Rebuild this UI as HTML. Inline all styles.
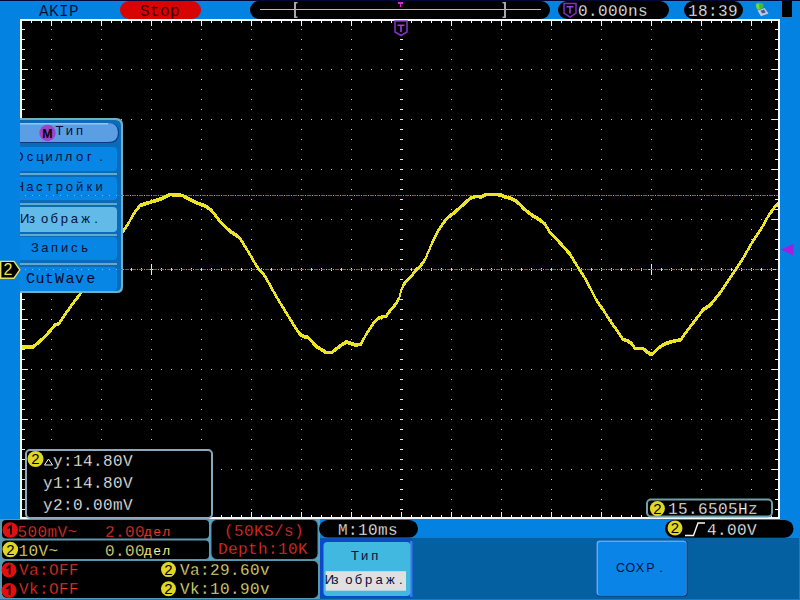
<!DOCTYPE html>
<html><head><meta charset="utf-8"><style>
html,body{margin:0;padding:0;background:#0482e2;overflow:hidden;}
svg{display:block;}
text{white-space:pre;}
</style></head><body>
<svg width="800" height="600" viewBox="0 0 800 600">
<rect width="800" height="600" fill="#0482e2"/><rect width="800" height="1" fill="#00083a"/><rect y="1" width="800" height="1" fill="#2a7ec8" opacity="0.6"/><rect x="20" y="19" width="760" height="500" fill="#f4faff"/><rect x="22" y="21" width="756" height="496" fill="#000"/><path d="M51 29h1v1h-1zM51 39h1v1h-1zM51 49h1v1h-1zM51 59h1v1h-1zM51 69h1v1h-1zM51 79h1v1h-1zM51 89h1v1h-1zM51 99h1v1h-1zM51 109h1v1h-1zM51 119h1v1h-1zM51 129h1v1h-1zM51 139h1v1h-1zM51 149h1v1h-1zM51 159h1v1h-1zM51 169h1v1h-1zM51 179h1v1h-1zM51 189h1v1h-1zM51 199h1v1h-1zM51 209h1v1h-1zM51 219h1v1h-1zM51 229h1v1h-1zM51 239h1v1h-1zM51 249h1v1h-1zM51 259h1v1h-1zM51 269h1v1h-1zM51 279h1v1h-1zM51 289h1v1h-1zM51 299h1v1h-1zM51 309h1v1h-1zM51 319h1v1h-1zM51 329h1v1h-1zM51 339h1v1h-1zM51 349h1v1h-1zM51 359h1v1h-1zM51 369h1v1h-1zM51 379h1v1h-1zM51 389h1v1h-1zM51 399h1v1h-1zM51 409h1v1h-1zM51 419h1v1h-1zM51 429h1v1h-1zM51 439h1v1h-1zM51 449h1v1h-1zM51 459h1v1h-1zM51 469h1v1h-1zM51 479h1v1h-1zM51 489h1v1h-1zM51 499h1v1h-1zM51 509h1v1h-1zM101 29h1v1h-1zM101 39h1v1h-1zM101 49h1v1h-1zM101 59h1v1h-1zM101 69h1v1h-1zM101 79h1v1h-1zM101 89h1v1h-1zM101 99h1v1h-1zM101 109h1v1h-1zM101 119h1v1h-1zM101 129h1v1h-1zM101 139h1v1h-1zM101 149h1v1h-1zM101 159h1v1h-1zM101 169h1v1h-1zM101 179h1v1h-1zM101 189h1v1h-1zM101 199h1v1h-1zM101 209h1v1h-1zM101 219h1v1h-1zM101 229h1v1h-1zM101 239h1v1h-1zM101 249h1v1h-1zM101 259h1v1h-1zM101 269h1v1h-1zM101 279h1v1h-1zM101 289h1v1h-1zM101 299h1v1h-1zM101 309h1v1h-1zM101 319h1v1h-1zM101 329h1v1h-1zM101 339h1v1h-1zM101 349h1v1h-1zM101 359h1v1h-1zM101 369h1v1h-1zM101 379h1v1h-1zM101 389h1v1h-1zM101 399h1v1h-1zM101 409h1v1h-1zM101 419h1v1h-1zM101 429h1v1h-1zM101 439h1v1h-1zM101 449h1v1h-1zM101 459h1v1h-1zM101 469h1v1h-1zM101 479h1v1h-1zM101 489h1v1h-1zM101 499h1v1h-1zM101 509h1v1h-1zM151 29h1v1h-1zM151 39h1v1h-1zM151 49h1v1h-1zM151 59h1v1h-1zM151 69h1v1h-1zM151 79h1v1h-1zM151 89h1v1h-1zM151 99h1v1h-1zM151 109h1v1h-1zM151 119h1v1h-1zM151 129h1v1h-1zM151 139h1v1h-1zM151 149h1v1h-1zM151 159h1v1h-1zM151 169h1v1h-1zM151 179h1v1h-1zM151 189h1v1h-1zM151 199h1v1h-1zM151 209h1v1h-1zM151 219h1v1h-1zM151 229h1v1h-1zM151 239h1v1h-1zM151 249h1v1h-1zM151 259h1v1h-1zM151 269h1v1h-1zM151 279h1v1h-1zM151 289h1v1h-1zM151 299h1v1h-1zM151 309h1v1h-1zM151 319h1v1h-1zM151 329h1v1h-1zM151 339h1v1h-1zM151 349h1v1h-1zM151 359h1v1h-1zM151 369h1v1h-1zM151 379h1v1h-1zM151 389h1v1h-1zM151 399h1v1h-1zM151 409h1v1h-1zM151 419h1v1h-1zM151 429h1v1h-1zM151 439h1v1h-1zM151 449h1v1h-1zM151 459h1v1h-1zM151 469h1v1h-1zM151 479h1v1h-1zM151 489h1v1h-1zM151 499h1v1h-1zM151 509h1v1h-1zM201 29h1v1h-1zM201 39h1v1h-1zM201 49h1v1h-1zM201 59h1v1h-1zM201 69h1v1h-1zM201 79h1v1h-1zM201 89h1v1h-1zM201 99h1v1h-1zM201 109h1v1h-1zM201 119h1v1h-1zM201 129h1v1h-1zM201 139h1v1h-1zM201 149h1v1h-1zM201 159h1v1h-1zM201 169h1v1h-1zM201 179h1v1h-1zM201 189h1v1h-1zM201 199h1v1h-1zM201 209h1v1h-1zM201 219h1v1h-1zM201 229h1v1h-1zM201 239h1v1h-1zM201 249h1v1h-1zM201 259h1v1h-1zM201 269h1v1h-1zM201 279h1v1h-1zM201 289h1v1h-1zM201 299h1v1h-1zM201 309h1v1h-1zM201 319h1v1h-1zM201 329h1v1h-1zM201 339h1v1h-1zM201 349h1v1h-1zM201 359h1v1h-1zM201 369h1v1h-1zM201 379h1v1h-1zM201 389h1v1h-1zM201 399h1v1h-1zM201 409h1v1h-1zM201 419h1v1h-1zM201 429h1v1h-1zM201 439h1v1h-1zM201 449h1v1h-1zM201 459h1v1h-1zM201 469h1v1h-1zM201 479h1v1h-1zM201 489h1v1h-1zM201 499h1v1h-1zM201 509h1v1h-1zM251 29h1v1h-1zM251 39h1v1h-1zM251 49h1v1h-1zM251 59h1v1h-1zM251 69h1v1h-1zM251 79h1v1h-1zM251 89h1v1h-1zM251 99h1v1h-1zM251 109h1v1h-1zM251 119h1v1h-1zM251 129h1v1h-1zM251 139h1v1h-1zM251 149h1v1h-1zM251 159h1v1h-1zM251 169h1v1h-1zM251 179h1v1h-1zM251 189h1v1h-1zM251 199h1v1h-1zM251 209h1v1h-1zM251 219h1v1h-1zM251 229h1v1h-1zM251 239h1v1h-1zM251 249h1v1h-1zM251 259h1v1h-1zM251 269h1v1h-1zM251 279h1v1h-1zM251 289h1v1h-1zM251 299h1v1h-1zM251 309h1v1h-1zM251 319h1v1h-1zM251 329h1v1h-1zM251 339h1v1h-1zM251 349h1v1h-1zM251 359h1v1h-1zM251 369h1v1h-1zM251 379h1v1h-1zM251 389h1v1h-1zM251 399h1v1h-1zM251 409h1v1h-1zM251 419h1v1h-1zM251 429h1v1h-1zM251 439h1v1h-1zM251 449h1v1h-1zM251 459h1v1h-1zM251 469h1v1h-1zM251 479h1v1h-1zM251 489h1v1h-1zM251 499h1v1h-1zM251 509h1v1h-1zM301 29h1v1h-1zM301 39h1v1h-1zM301 49h1v1h-1zM301 59h1v1h-1zM301 69h1v1h-1zM301 79h1v1h-1zM301 89h1v1h-1zM301 99h1v1h-1zM301 109h1v1h-1zM301 119h1v1h-1zM301 129h1v1h-1zM301 139h1v1h-1zM301 149h1v1h-1zM301 159h1v1h-1zM301 169h1v1h-1zM301 179h1v1h-1zM301 189h1v1h-1zM301 199h1v1h-1zM301 209h1v1h-1zM301 219h1v1h-1zM301 229h1v1h-1zM301 239h1v1h-1zM301 249h1v1h-1zM301 259h1v1h-1zM301 269h1v1h-1zM301 279h1v1h-1zM301 289h1v1h-1zM301 299h1v1h-1zM301 309h1v1h-1zM301 319h1v1h-1zM301 329h1v1h-1zM301 339h1v1h-1zM301 349h1v1h-1zM301 359h1v1h-1zM301 369h1v1h-1zM301 379h1v1h-1zM301 389h1v1h-1zM301 399h1v1h-1zM301 409h1v1h-1zM301 419h1v1h-1zM301 429h1v1h-1zM301 439h1v1h-1zM301 449h1v1h-1zM301 459h1v1h-1zM301 469h1v1h-1zM301 479h1v1h-1zM301 489h1v1h-1zM301 499h1v1h-1zM301 509h1v1h-1zM351 29h1v1h-1zM351 39h1v1h-1zM351 49h1v1h-1zM351 59h1v1h-1zM351 69h1v1h-1zM351 79h1v1h-1zM351 89h1v1h-1zM351 99h1v1h-1zM351 109h1v1h-1zM351 119h1v1h-1zM351 129h1v1h-1zM351 139h1v1h-1zM351 149h1v1h-1zM351 159h1v1h-1zM351 169h1v1h-1zM351 179h1v1h-1zM351 189h1v1h-1zM351 199h1v1h-1zM351 209h1v1h-1zM351 219h1v1h-1zM351 229h1v1h-1zM351 239h1v1h-1zM351 249h1v1h-1zM351 259h1v1h-1zM351 269h1v1h-1zM351 279h1v1h-1zM351 289h1v1h-1zM351 299h1v1h-1zM351 309h1v1h-1zM351 319h1v1h-1zM351 329h1v1h-1zM351 339h1v1h-1zM351 349h1v1h-1zM351 359h1v1h-1zM351 369h1v1h-1zM351 379h1v1h-1zM351 389h1v1h-1zM351 399h1v1h-1zM351 409h1v1h-1zM351 419h1v1h-1zM351 429h1v1h-1zM351 439h1v1h-1zM351 449h1v1h-1zM351 459h1v1h-1zM351 469h1v1h-1zM351 479h1v1h-1zM351 489h1v1h-1zM351 499h1v1h-1zM351 509h1v1h-1zM451 29h1v1h-1zM451 39h1v1h-1zM451 49h1v1h-1zM451 59h1v1h-1zM451 69h1v1h-1zM451 79h1v1h-1zM451 89h1v1h-1zM451 99h1v1h-1zM451 109h1v1h-1zM451 119h1v1h-1zM451 129h1v1h-1zM451 139h1v1h-1zM451 149h1v1h-1zM451 159h1v1h-1zM451 169h1v1h-1zM451 179h1v1h-1zM451 189h1v1h-1zM451 199h1v1h-1zM451 209h1v1h-1zM451 219h1v1h-1zM451 229h1v1h-1zM451 239h1v1h-1zM451 249h1v1h-1zM451 259h1v1h-1zM451 269h1v1h-1zM451 279h1v1h-1zM451 289h1v1h-1zM451 299h1v1h-1zM451 309h1v1h-1zM451 319h1v1h-1zM451 329h1v1h-1zM451 339h1v1h-1zM451 349h1v1h-1zM451 359h1v1h-1zM451 369h1v1h-1zM451 379h1v1h-1zM451 389h1v1h-1zM451 399h1v1h-1zM451 409h1v1h-1zM451 419h1v1h-1zM451 429h1v1h-1zM451 439h1v1h-1zM451 449h1v1h-1zM451 459h1v1h-1zM451 469h1v1h-1zM451 479h1v1h-1zM451 489h1v1h-1zM451 499h1v1h-1zM451 509h1v1h-1zM501 29h1v1h-1zM501 39h1v1h-1zM501 49h1v1h-1zM501 59h1v1h-1zM501 69h1v1h-1zM501 79h1v1h-1zM501 89h1v1h-1zM501 99h1v1h-1zM501 109h1v1h-1zM501 119h1v1h-1zM501 129h1v1h-1zM501 139h1v1h-1zM501 149h1v1h-1zM501 159h1v1h-1zM501 169h1v1h-1zM501 179h1v1h-1zM501 189h1v1h-1zM501 199h1v1h-1zM501 209h1v1h-1zM501 219h1v1h-1zM501 229h1v1h-1zM501 239h1v1h-1zM501 249h1v1h-1zM501 259h1v1h-1zM501 269h1v1h-1zM501 279h1v1h-1zM501 289h1v1h-1zM501 299h1v1h-1zM501 309h1v1h-1zM501 319h1v1h-1zM501 329h1v1h-1zM501 339h1v1h-1zM501 349h1v1h-1zM501 359h1v1h-1zM501 369h1v1h-1zM501 379h1v1h-1zM501 389h1v1h-1zM501 399h1v1h-1zM501 409h1v1h-1zM501 419h1v1h-1zM501 429h1v1h-1zM501 439h1v1h-1zM501 449h1v1h-1zM501 459h1v1h-1zM501 469h1v1h-1zM501 479h1v1h-1zM501 489h1v1h-1zM501 499h1v1h-1zM501 509h1v1h-1zM551 29h1v1h-1zM551 39h1v1h-1zM551 49h1v1h-1zM551 59h1v1h-1zM551 69h1v1h-1zM551 79h1v1h-1zM551 89h1v1h-1zM551 99h1v1h-1zM551 109h1v1h-1zM551 119h1v1h-1zM551 129h1v1h-1zM551 139h1v1h-1zM551 149h1v1h-1zM551 159h1v1h-1zM551 169h1v1h-1zM551 179h1v1h-1zM551 189h1v1h-1zM551 199h1v1h-1zM551 209h1v1h-1zM551 219h1v1h-1zM551 229h1v1h-1zM551 239h1v1h-1zM551 249h1v1h-1zM551 259h1v1h-1zM551 269h1v1h-1zM551 279h1v1h-1zM551 289h1v1h-1zM551 299h1v1h-1zM551 309h1v1h-1zM551 319h1v1h-1zM551 329h1v1h-1zM551 339h1v1h-1zM551 349h1v1h-1zM551 359h1v1h-1zM551 369h1v1h-1zM551 379h1v1h-1zM551 389h1v1h-1zM551 399h1v1h-1zM551 409h1v1h-1zM551 419h1v1h-1zM551 429h1v1h-1zM551 439h1v1h-1zM551 449h1v1h-1zM551 459h1v1h-1zM551 469h1v1h-1zM551 479h1v1h-1zM551 489h1v1h-1zM551 499h1v1h-1zM551 509h1v1h-1zM601 29h1v1h-1zM601 39h1v1h-1zM601 49h1v1h-1zM601 59h1v1h-1zM601 69h1v1h-1zM601 79h1v1h-1zM601 89h1v1h-1zM601 99h1v1h-1zM601 109h1v1h-1zM601 119h1v1h-1zM601 129h1v1h-1zM601 139h1v1h-1zM601 149h1v1h-1zM601 159h1v1h-1zM601 169h1v1h-1zM601 179h1v1h-1zM601 189h1v1h-1zM601 199h1v1h-1zM601 209h1v1h-1zM601 219h1v1h-1zM601 229h1v1h-1zM601 239h1v1h-1zM601 249h1v1h-1zM601 259h1v1h-1zM601 269h1v1h-1zM601 279h1v1h-1zM601 289h1v1h-1zM601 299h1v1h-1zM601 309h1v1h-1zM601 319h1v1h-1zM601 329h1v1h-1zM601 339h1v1h-1zM601 349h1v1h-1zM601 359h1v1h-1zM601 369h1v1h-1zM601 379h1v1h-1zM601 389h1v1h-1zM601 399h1v1h-1zM601 409h1v1h-1zM601 419h1v1h-1zM601 429h1v1h-1zM601 439h1v1h-1zM601 449h1v1h-1zM601 459h1v1h-1zM601 469h1v1h-1zM601 479h1v1h-1zM601 489h1v1h-1zM601 499h1v1h-1zM601 509h1v1h-1zM651 29h1v1h-1zM651 39h1v1h-1zM651 49h1v1h-1zM651 59h1v1h-1zM651 69h1v1h-1zM651 79h1v1h-1zM651 89h1v1h-1zM651 99h1v1h-1zM651 109h1v1h-1zM651 119h1v1h-1zM651 129h1v1h-1zM651 139h1v1h-1zM651 149h1v1h-1zM651 159h1v1h-1zM651 169h1v1h-1zM651 179h1v1h-1zM651 189h1v1h-1zM651 199h1v1h-1zM651 209h1v1h-1zM651 219h1v1h-1zM651 229h1v1h-1zM651 239h1v1h-1zM651 249h1v1h-1zM651 259h1v1h-1zM651 269h1v1h-1zM651 279h1v1h-1zM651 289h1v1h-1zM651 299h1v1h-1zM651 309h1v1h-1zM651 319h1v1h-1zM651 329h1v1h-1zM651 339h1v1h-1zM651 349h1v1h-1zM651 359h1v1h-1zM651 369h1v1h-1zM651 379h1v1h-1zM651 389h1v1h-1zM651 399h1v1h-1zM651 409h1v1h-1zM651 419h1v1h-1zM651 429h1v1h-1zM651 439h1v1h-1zM651 449h1v1h-1zM651 459h1v1h-1zM651 469h1v1h-1zM651 479h1v1h-1zM651 489h1v1h-1zM651 499h1v1h-1zM651 509h1v1h-1zM701 29h1v1h-1zM701 39h1v1h-1zM701 49h1v1h-1zM701 59h1v1h-1zM701 69h1v1h-1zM701 79h1v1h-1zM701 89h1v1h-1zM701 99h1v1h-1zM701 109h1v1h-1zM701 119h1v1h-1zM701 129h1v1h-1zM701 139h1v1h-1zM701 149h1v1h-1zM701 159h1v1h-1zM701 169h1v1h-1zM701 179h1v1h-1zM701 189h1v1h-1zM701 199h1v1h-1zM701 209h1v1h-1zM701 219h1v1h-1zM701 229h1v1h-1zM701 239h1v1h-1zM701 249h1v1h-1zM701 259h1v1h-1zM701 269h1v1h-1zM701 279h1v1h-1zM701 289h1v1h-1zM701 299h1v1h-1zM701 309h1v1h-1zM701 319h1v1h-1zM701 329h1v1h-1zM701 339h1v1h-1zM701 349h1v1h-1zM701 359h1v1h-1zM701 369h1v1h-1zM701 379h1v1h-1zM701 389h1v1h-1zM701 399h1v1h-1zM701 409h1v1h-1zM701 419h1v1h-1zM701 429h1v1h-1zM701 439h1v1h-1zM701 449h1v1h-1zM701 459h1v1h-1zM701 469h1v1h-1zM701 479h1v1h-1zM701 489h1v1h-1zM701 499h1v1h-1zM701 509h1v1h-1zM751 29h1v1h-1zM751 39h1v1h-1zM751 49h1v1h-1zM751 59h1v1h-1zM751 69h1v1h-1zM751 79h1v1h-1zM751 89h1v1h-1zM751 99h1v1h-1zM751 109h1v1h-1zM751 119h1v1h-1zM751 129h1v1h-1zM751 139h1v1h-1zM751 149h1v1h-1zM751 159h1v1h-1zM751 169h1v1h-1zM751 179h1v1h-1zM751 189h1v1h-1zM751 199h1v1h-1zM751 209h1v1h-1zM751 219h1v1h-1zM751 229h1v1h-1zM751 239h1v1h-1zM751 249h1v1h-1zM751 259h1v1h-1zM751 269h1v1h-1zM751 279h1v1h-1zM751 289h1v1h-1zM751 299h1v1h-1zM751 309h1v1h-1zM751 319h1v1h-1zM751 329h1v1h-1zM751 339h1v1h-1zM751 349h1v1h-1zM751 359h1v1h-1zM751 369h1v1h-1zM751 379h1v1h-1zM751 389h1v1h-1zM751 399h1v1h-1zM751 409h1v1h-1zM751 419h1v1h-1zM751 429h1v1h-1zM751 439h1v1h-1zM751 449h1v1h-1zM751 459h1v1h-1zM751 469h1v1h-1zM751 479h1v1h-1zM751 489h1v1h-1zM751 499h1v1h-1zM751 509h1v1h-1zM31 69h1v1h-1zM41 69h1v1h-1zM61 69h1v1h-1zM71 69h1v1h-1zM81 69h1v1h-1zM91 69h1v1h-1zM111 69h1v1h-1zM121 69h1v1h-1zM131 69h1v1h-1zM141 69h1v1h-1zM161 69h1v1h-1zM171 69h1v1h-1zM181 69h1v1h-1zM191 69h1v1h-1zM211 69h1v1h-1zM221 69h1v1h-1zM231 69h1v1h-1zM241 69h1v1h-1zM261 69h1v1h-1zM271 69h1v1h-1zM281 69h1v1h-1zM291 69h1v1h-1zM311 69h1v1h-1zM321 69h1v1h-1zM331 69h1v1h-1zM341 69h1v1h-1zM361 69h1v1h-1zM371 69h1v1h-1zM381 69h1v1h-1zM391 69h1v1h-1zM411 69h1v1h-1zM421 69h1v1h-1zM431 69h1v1h-1zM441 69h1v1h-1zM461 69h1v1h-1zM471 69h1v1h-1zM481 69h1v1h-1zM491 69h1v1h-1zM511 69h1v1h-1zM521 69h1v1h-1zM531 69h1v1h-1zM541 69h1v1h-1zM561 69h1v1h-1zM571 69h1v1h-1zM581 69h1v1h-1zM591 69h1v1h-1zM611 69h1v1h-1zM621 69h1v1h-1zM631 69h1v1h-1zM641 69h1v1h-1zM661 69h1v1h-1zM671 69h1v1h-1zM681 69h1v1h-1zM691 69h1v1h-1zM711 69h1v1h-1zM721 69h1v1h-1zM731 69h1v1h-1zM741 69h1v1h-1zM761 69h1v1h-1zM771 69h1v1h-1zM31 119h1v1h-1zM41 119h1v1h-1zM61 119h1v1h-1zM71 119h1v1h-1zM81 119h1v1h-1zM91 119h1v1h-1zM111 119h1v1h-1zM121 119h1v1h-1zM131 119h1v1h-1zM141 119h1v1h-1zM161 119h1v1h-1zM171 119h1v1h-1zM181 119h1v1h-1zM191 119h1v1h-1zM211 119h1v1h-1zM221 119h1v1h-1zM231 119h1v1h-1zM241 119h1v1h-1zM261 119h1v1h-1zM271 119h1v1h-1zM281 119h1v1h-1zM291 119h1v1h-1zM311 119h1v1h-1zM321 119h1v1h-1zM331 119h1v1h-1zM341 119h1v1h-1zM361 119h1v1h-1zM371 119h1v1h-1zM381 119h1v1h-1zM391 119h1v1h-1zM411 119h1v1h-1zM421 119h1v1h-1zM431 119h1v1h-1zM441 119h1v1h-1zM461 119h1v1h-1zM471 119h1v1h-1zM481 119h1v1h-1zM491 119h1v1h-1zM511 119h1v1h-1zM521 119h1v1h-1zM531 119h1v1h-1zM541 119h1v1h-1zM561 119h1v1h-1zM571 119h1v1h-1zM581 119h1v1h-1zM591 119h1v1h-1zM611 119h1v1h-1zM621 119h1v1h-1zM631 119h1v1h-1zM641 119h1v1h-1zM661 119h1v1h-1zM671 119h1v1h-1zM681 119h1v1h-1zM691 119h1v1h-1zM711 119h1v1h-1zM721 119h1v1h-1zM731 119h1v1h-1zM741 119h1v1h-1zM761 119h1v1h-1zM771 119h1v1h-1zM31 169h1v1h-1zM41 169h1v1h-1zM61 169h1v1h-1zM71 169h1v1h-1zM81 169h1v1h-1zM91 169h1v1h-1zM111 169h1v1h-1zM121 169h1v1h-1zM131 169h1v1h-1zM141 169h1v1h-1zM161 169h1v1h-1zM171 169h1v1h-1zM181 169h1v1h-1zM191 169h1v1h-1zM211 169h1v1h-1zM221 169h1v1h-1zM231 169h1v1h-1zM241 169h1v1h-1zM261 169h1v1h-1zM271 169h1v1h-1zM281 169h1v1h-1zM291 169h1v1h-1zM311 169h1v1h-1zM321 169h1v1h-1zM331 169h1v1h-1zM341 169h1v1h-1zM361 169h1v1h-1zM371 169h1v1h-1zM381 169h1v1h-1zM391 169h1v1h-1zM411 169h1v1h-1zM421 169h1v1h-1zM431 169h1v1h-1zM441 169h1v1h-1zM461 169h1v1h-1zM471 169h1v1h-1zM481 169h1v1h-1zM491 169h1v1h-1zM511 169h1v1h-1zM521 169h1v1h-1zM531 169h1v1h-1zM541 169h1v1h-1zM561 169h1v1h-1zM571 169h1v1h-1zM581 169h1v1h-1zM591 169h1v1h-1zM611 169h1v1h-1zM621 169h1v1h-1zM631 169h1v1h-1zM641 169h1v1h-1zM661 169h1v1h-1zM671 169h1v1h-1zM681 169h1v1h-1zM691 169h1v1h-1zM711 169h1v1h-1zM721 169h1v1h-1zM731 169h1v1h-1zM741 169h1v1h-1zM761 169h1v1h-1zM771 169h1v1h-1zM31 219h1v1h-1zM41 219h1v1h-1zM61 219h1v1h-1zM71 219h1v1h-1zM81 219h1v1h-1zM91 219h1v1h-1zM111 219h1v1h-1zM121 219h1v1h-1zM131 219h1v1h-1zM141 219h1v1h-1zM161 219h1v1h-1zM171 219h1v1h-1zM181 219h1v1h-1zM191 219h1v1h-1zM211 219h1v1h-1zM221 219h1v1h-1zM231 219h1v1h-1zM241 219h1v1h-1zM261 219h1v1h-1zM271 219h1v1h-1zM281 219h1v1h-1zM291 219h1v1h-1zM311 219h1v1h-1zM321 219h1v1h-1zM331 219h1v1h-1zM341 219h1v1h-1zM361 219h1v1h-1zM371 219h1v1h-1zM381 219h1v1h-1zM391 219h1v1h-1zM411 219h1v1h-1zM421 219h1v1h-1zM431 219h1v1h-1zM441 219h1v1h-1zM461 219h1v1h-1zM471 219h1v1h-1zM481 219h1v1h-1zM491 219h1v1h-1zM511 219h1v1h-1zM521 219h1v1h-1zM531 219h1v1h-1zM541 219h1v1h-1zM561 219h1v1h-1zM571 219h1v1h-1zM581 219h1v1h-1zM591 219h1v1h-1zM611 219h1v1h-1zM621 219h1v1h-1zM631 219h1v1h-1zM641 219h1v1h-1zM661 219h1v1h-1zM671 219h1v1h-1zM681 219h1v1h-1zM691 219h1v1h-1zM711 219h1v1h-1zM721 219h1v1h-1zM731 219h1v1h-1zM741 219h1v1h-1zM761 219h1v1h-1zM771 219h1v1h-1zM31 319h1v1h-1zM41 319h1v1h-1zM61 319h1v1h-1zM71 319h1v1h-1zM81 319h1v1h-1zM91 319h1v1h-1zM111 319h1v1h-1zM121 319h1v1h-1zM131 319h1v1h-1zM141 319h1v1h-1zM161 319h1v1h-1zM171 319h1v1h-1zM181 319h1v1h-1zM191 319h1v1h-1zM211 319h1v1h-1zM221 319h1v1h-1zM231 319h1v1h-1zM241 319h1v1h-1zM261 319h1v1h-1zM271 319h1v1h-1zM281 319h1v1h-1zM291 319h1v1h-1zM311 319h1v1h-1zM321 319h1v1h-1zM331 319h1v1h-1zM341 319h1v1h-1zM361 319h1v1h-1zM371 319h1v1h-1zM381 319h1v1h-1zM391 319h1v1h-1zM411 319h1v1h-1zM421 319h1v1h-1zM431 319h1v1h-1zM441 319h1v1h-1zM461 319h1v1h-1zM471 319h1v1h-1zM481 319h1v1h-1zM491 319h1v1h-1zM511 319h1v1h-1zM521 319h1v1h-1zM531 319h1v1h-1zM541 319h1v1h-1zM561 319h1v1h-1zM571 319h1v1h-1zM581 319h1v1h-1zM591 319h1v1h-1zM611 319h1v1h-1zM621 319h1v1h-1zM631 319h1v1h-1zM641 319h1v1h-1zM661 319h1v1h-1zM671 319h1v1h-1zM681 319h1v1h-1zM691 319h1v1h-1zM711 319h1v1h-1zM721 319h1v1h-1zM731 319h1v1h-1zM741 319h1v1h-1zM761 319h1v1h-1zM771 319h1v1h-1zM31 369h1v1h-1zM41 369h1v1h-1zM61 369h1v1h-1zM71 369h1v1h-1zM81 369h1v1h-1zM91 369h1v1h-1zM111 369h1v1h-1zM121 369h1v1h-1zM131 369h1v1h-1zM141 369h1v1h-1zM161 369h1v1h-1zM171 369h1v1h-1zM181 369h1v1h-1zM191 369h1v1h-1zM211 369h1v1h-1zM221 369h1v1h-1zM231 369h1v1h-1zM241 369h1v1h-1zM261 369h1v1h-1zM271 369h1v1h-1zM281 369h1v1h-1zM291 369h1v1h-1zM311 369h1v1h-1zM321 369h1v1h-1zM331 369h1v1h-1zM341 369h1v1h-1zM361 369h1v1h-1zM371 369h1v1h-1zM381 369h1v1h-1zM391 369h1v1h-1zM411 369h1v1h-1zM421 369h1v1h-1zM431 369h1v1h-1zM441 369h1v1h-1zM461 369h1v1h-1zM471 369h1v1h-1zM481 369h1v1h-1zM491 369h1v1h-1zM511 369h1v1h-1zM521 369h1v1h-1zM531 369h1v1h-1zM541 369h1v1h-1zM561 369h1v1h-1zM571 369h1v1h-1zM581 369h1v1h-1zM591 369h1v1h-1zM611 369h1v1h-1zM621 369h1v1h-1zM631 369h1v1h-1zM641 369h1v1h-1zM661 369h1v1h-1zM671 369h1v1h-1zM681 369h1v1h-1zM691 369h1v1h-1zM711 369h1v1h-1zM721 369h1v1h-1zM731 369h1v1h-1zM741 369h1v1h-1zM761 369h1v1h-1zM771 369h1v1h-1zM31 419h1v1h-1zM41 419h1v1h-1zM61 419h1v1h-1zM71 419h1v1h-1zM81 419h1v1h-1zM91 419h1v1h-1zM111 419h1v1h-1zM121 419h1v1h-1zM131 419h1v1h-1zM141 419h1v1h-1zM161 419h1v1h-1zM171 419h1v1h-1zM181 419h1v1h-1zM191 419h1v1h-1zM211 419h1v1h-1zM221 419h1v1h-1zM231 419h1v1h-1zM241 419h1v1h-1zM261 419h1v1h-1zM271 419h1v1h-1zM281 419h1v1h-1zM291 419h1v1h-1zM311 419h1v1h-1zM321 419h1v1h-1zM331 419h1v1h-1zM341 419h1v1h-1zM361 419h1v1h-1zM371 419h1v1h-1zM381 419h1v1h-1zM391 419h1v1h-1zM411 419h1v1h-1zM421 419h1v1h-1zM431 419h1v1h-1zM441 419h1v1h-1zM461 419h1v1h-1zM471 419h1v1h-1zM481 419h1v1h-1zM491 419h1v1h-1zM511 419h1v1h-1zM521 419h1v1h-1zM531 419h1v1h-1zM541 419h1v1h-1zM561 419h1v1h-1zM571 419h1v1h-1zM581 419h1v1h-1zM591 419h1v1h-1zM611 419h1v1h-1zM621 419h1v1h-1zM631 419h1v1h-1zM641 419h1v1h-1zM661 419h1v1h-1zM671 419h1v1h-1zM681 419h1v1h-1zM691 419h1v1h-1zM711 419h1v1h-1zM721 419h1v1h-1zM731 419h1v1h-1zM741 419h1v1h-1zM761 419h1v1h-1zM771 419h1v1h-1zM31 469h1v1h-1zM41 469h1v1h-1zM61 469h1v1h-1zM71 469h1v1h-1zM81 469h1v1h-1zM91 469h1v1h-1zM111 469h1v1h-1zM121 469h1v1h-1zM131 469h1v1h-1zM141 469h1v1h-1zM161 469h1v1h-1zM171 469h1v1h-1zM181 469h1v1h-1zM191 469h1v1h-1zM211 469h1v1h-1zM221 469h1v1h-1zM231 469h1v1h-1zM241 469h1v1h-1zM261 469h1v1h-1zM271 469h1v1h-1zM281 469h1v1h-1zM291 469h1v1h-1zM311 469h1v1h-1zM321 469h1v1h-1zM331 469h1v1h-1zM341 469h1v1h-1zM361 469h1v1h-1zM371 469h1v1h-1zM381 469h1v1h-1zM391 469h1v1h-1zM411 469h1v1h-1zM421 469h1v1h-1zM431 469h1v1h-1zM441 469h1v1h-1zM461 469h1v1h-1zM471 469h1v1h-1zM481 469h1v1h-1zM491 469h1v1h-1zM511 469h1v1h-1zM521 469h1v1h-1zM531 469h1v1h-1zM541 469h1v1h-1zM561 469h1v1h-1zM571 469h1v1h-1zM581 469h1v1h-1zM591 469h1v1h-1zM611 469h1v1h-1zM621 469h1v1h-1zM631 469h1v1h-1zM641 469h1v1h-1zM661 469h1v1h-1zM671 469h1v1h-1zM681 469h1v1h-1zM691 469h1v1h-1zM711 469h1v1h-1zM721 469h1v1h-1zM731 469h1v1h-1zM741 469h1v1h-1zM761 469h1v1h-1zM771 469h1v1h-1z" fill="#c8c8c8" shape-rendering="crispEdges"/><path d="M400 29h3v1h-3zM400 39h3v1h-3zM400 49h3v1h-3zM400 59h3v1h-3zM400 69h3v1h-3zM400 79h3v1h-3zM400 89h3v1h-3zM400 99h3v1h-3zM400 109h3v1h-3zM400 119h3v1h-3zM400 129h3v1h-3zM400 139h3v1h-3zM400 149h3v1h-3zM400 159h3v1h-3zM400 169h3v1h-3zM400 179h3v1h-3zM400 189h3v1h-3zM400 199h3v1h-3zM400 209h3v1h-3zM400 219h3v1h-3zM400 229h3v1h-3zM400 239h3v1h-3zM400 249h3v1h-3zM400 259h3v1h-3zM400 269h3v1h-3zM400 279h3v1h-3zM400 289h3v1h-3zM400 299h3v1h-3zM400 309h3v1h-3zM400 319h3v1h-3zM400 329h3v1h-3zM400 339h3v1h-3zM400 349h3v1h-3zM400 359h3v1h-3zM400 369h3v1h-3zM400 379h3v1h-3zM400 389h3v1h-3zM400 399h3v1h-3zM400 409h3v1h-3zM400 419h3v1h-3zM400 429h3v1h-3zM400 439h3v1h-3zM400 449h3v1h-3zM400 459h3v1h-3zM400 469h3v1h-3zM400 479h3v1h-3zM400 489h3v1h-3zM400 499h3v1h-3zM400 509h3v1h-3zM31 268h1v3h-1zM41 268h1v3h-1zM51 268h1v3h-1zM61 268h1v3h-1zM71 268h1v3h-1zM81 268h1v3h-1zM91 268h1v3h-1zM101 268h1v3h-1zM111 268h1v3h-1zM121 268h1v3h-1zM131 268h1v3h-1zM141 268h1v3h-1zM151 268h1v3h-1zM161 268h1v3h-1zM171 268h1v3h-1zM181 268h1v3h-1zM191 268h1v3h-1zM201 268h1v3h-1zM211 268h1v3h-1zM221 268h1v3h-1zM231 268h1v3h-1zM241 268h1v3h-1zM251 268h1v3h-1zM261 268h1v3h-1zM271 268h1v3h-1zM281 268h1v3h-1zM291 268h1v3h-1zM301 268h1v3h-1zM311 268h1v3h-1zM321 268h1v3h-1zM331 268h1v3h-1zM341 268h1v3h-1zM351 268h1v3h-1zM361 268h1v3h-1zM371 268h1v3h-1zM381 268h1v3h-1zM391 268h1v3h-1zM401 268h1v3h-1zM411 268h1v3h-1zM421 268h1v3h-1zM431 268h1v3h-1zM441 268h1v3h-1zM451 268h1v3h-1zM461 268h1v3h-1zM471 268h1v3h-1zM481 268h1v3h-1zM491 268h1v3h-1zM501 268h1v3h-1zM511 268h1v3h-1zM521 268h1v3h-1zM531 268h1v3h-1zM541 268h1v3h-1zM551 268h1v3h-1zM561 268h1v3h-1zM571 268h1v3h-1zM581 268h1v3h-1zM591 268h1v3h-1zM601 268h1v3h-1zM611 268h1v3h-1zM621 268h1v3h-1zM631 268h1v3h-1zM641 268h1v3h-1zM651 268h1v3h-1zM661 268h1v3h-1zM671 268h1v3h-1zM681 268h1v3h-1zM691 268h1v3h-1zM701 268h1v3h-1zM711 268h1v3h-1zM721 268h1v3h-1zM731 268h1v3h-1zM741 268h1v3h-1zM751 268h1v3h-1zM761 268h1v3h-1zM771 268h1v3h-1zM151 264h1v11h-1z M149 269h5v1h-5zM651 264h1v11h-1z M649 269h5v1h-5z" fill="#e8e8e8" shape-rendering="crispEdges"/><path d="M31 21h1v2h-1zM31 515h1v2h-1zM41 21h1v2h-1zM41 515h1v2h-1zM51 21h1v5h-1zM51 512h1v5h-1zM61 21h1v2h-1zM61 515h1v2h-1zM71 21h1v2h-1zM71 515h1v2h-1zM81 21h1v2h-1zM81 515h1v2h-1zM91 21h1v2h-1zM91 515h1v2h-1zM101 21h1v5h-1zM101 512h1v5h-1zM111 21h1v2h-1zM111 515h1v2h-1zM121 21h1v2h-1zM121 515h1v2h-1zM131 21h1v2h-1zM131 515h1v2h-1zM141 21h1v2h-1zM141 515h1v2h-1zM151 21h1v5h-1zM151 512h1v5h-1zM161 21h1v2h-1zM161 515h1v2h-1zM171 21h1v2h-1zM171 515h1v2h-1zM181 21h1v2h-1zM181 515h1v2h-1zM191 21h1v2h-1zM191 515h1v2h-1zM201 21h1v5h-1zM201 512h1v5h-1zM211 21h1v2h-1zM211 515h1v2h-1zM221 21h1v2h-1zM221 515h1v2h-1zM231 21h1v2h-1zM231 515h1v2h-1zM241 21h1v2h-1zM241 515h1v2h-1zM251 21h1v5h-1zM251 512h1v5h-1zM261 21h1v2h-1zM261 515h1v2h-1zM271 21h1v2h-1zM271 515h1v2h-1zM281 21h1v2h-1zM281 515h1v2h-1zM291 21h1v2h-1zM291 515h1v2h-1zM301 21h1v5h-1zM301 512h1v5h-1zM311 21h1v2h-1zM311 515h1v2h-1zM321 21h1v2h-1zM321 515h1v2h-1zM331 21h1v2h-1zM331 515h1v2h-1zM341 21h1v2h-1zM341 515h1v2h-1zM351 21h1v5h-1zM351 512h1v5h-1zM361 21h1v2h-1zM361 515h1v2h-1zM371 21h1v2h-1zM371 515h1v2h-1zM381 21h1v2h-1zM381 515h1v2h-1zM391 21h1v2h-1zM391 515h1v2h-1zM401 21h1v5h-1zM401 512h1v5h-1zM411 21h1v2h-1zM411 515h1v2h-1zM421 21h1v2h-1zM421 515h1v2h-1zM431 21h1v2h-1zM431 515h1v2h-1zM441 21h1v2h-1zM441 515h1v2h-1zM451 21h1v5h-1zM451 512h1v5h-1zM461 21h1v2h-1zM461 515h1v2h-1zM471 21h1v2h-1zM471 515h1v2h-1zM481 21h1v2h-1zM481 515h1v2h-1zM491 21h1v2h-1zM491 515h1v2h-1zM501 21h1v5h-1zM501 512h1v5h-1zM511 21h1v2h-1zM511 515h1v2h-1zM521 21h1v2h-1zM521 515h1v2h-1zM531 21h1v2h-1zM531 515h1v2h-1zM541 21h1v2h-1zM541 515h1v2h-1zM551 21h1v5h-1zM551 512h1v5h-1zM561 21h1v2h-1zM561 515h1v2h-1zM571 21h1v2h-1zM571 515h1v2h-1zM581 21h1v2h-1zM581 515h1v2h-1zM591 21h1v2h-1zM591 515h1v2h-1zM601 21h1v5h-1zM601 512h1v5h-1zM611 21h1v2h-1zM611 515h1v2h-1zM621 21h1v2h-1zM621 515h1v2h-1zM631 21h1v2h-1zM631 515h1v2h-1zM641 21h1v2h-1zM641 515h1v2h-1zM651 21h1v5h-1zM651 512h1v5h-1zM661 21h1v2h-1zM661 515h1v2h-1zM671 21h1v2h-1zM671 515h1v2h-1zM681 21h1v2h-1zM681 515h1v2h-1zM691 21h1v2h-1zM691 515h1v2h-1zM701 21h1v5h-1zM701 512h1v5h-1zM711 21h1v2h-1zM711 515h1v2h-1zM721 21h1v2h-1zM721 515h1v2h-1zM731 21h1v2h-1zM731 515h1v2h-1zM741 21h1v2h-1zM741 515h1v2h-1zM751 21h1v5h-1zM751 512h1v5h-1zM761 21h1v2h-1zM761 515h1v2h-1zM771 21h1v2h-1zM771 515h1v2h-1zM22 29h3v1h-3zM775 29h3v1h-3zM22 39h3v1h-3zM775 39h3v1h-3zM22 49h3v1h-3zM775 49h3v1h-3zM22 59h3v1h-3zM775 59h3v1h-3zM22 69h6v1h-6zM772 69h6v1h-6zM22 79h3v1h-3zM775 79h3v1h-3zM22 89h3v1h-3zM775 89h3v1h-3zM22 99h3v1h-3zM775 99h3v1h-3zM22 109h3v1h-3zM775 109h3v1h-3zM22 119h6v1h-6zM772 119h6v1h-6zM22 129h3v1h-3zM775 129h3v1h-3zM22 139h3v1h-3zM775 139h3v1h-3zM22 149h3v1h-3zM775 149h3v1h-3zM22 159h3v1h-3zM775 159h3v1h-3zM22 169h6v1h-6zM772 169h6v1h-6zM22 179h3v1h-3zM775 179h3v1h-3zM22 189h3v1h-3zM775 189h3v1h-3zM22 199h3v1h-3zM775 199h3v1h-3zM22 209h3v1h-3zM775 209h3v1h-3zM22 219h6v1h-6zM772 219h6v1h-6zM22 229h3v1h-3zM775 229h3v1h-3zM22 239h3v1h-3zM775 239h3v1h-3zM22 249h3v1h-3zM775 249h3v1h-3zM22 259h3v1h-3zM775 259h3v1h-3zM22 269h6v1h-6zM772 269h6v1h-6zM22 279h3v1h-3zM775 279h3v1h-3zM22 289h3v1h-3zM775 289h3v1h-3zM22 299h3v1h-3zM775 299h3v1h-3zM22 309h3v1h-3zM775 309h3v1h-3zM22 319h6v1h-6zM772 319h6v1h-6zM22 329h3v1h-3zM775 329h3v1h-3zM22 339h3v1h-3zM775 339h3v1h-3zM22 349h3v1h-3zM775 349h3v1h-3zM22 359h3v1h-3zM775 359h3v1h-3zM22 369h6v1h-6zM772 369h6v1h-6zM22 379h3v1h-3zM775 379h3v1h-3zM22 389h3v1h-3zM775 389h3v1h-3zM22 399h3v1h-3zM775 399h3v1h-3zM22 409h3v1h-3zM775 409h3v1h-3zM22 419h6v1h-6zM772 419h6v1h-6zM22 429h3v1h-3zM775 429h3v1h-3zM22 439h3v1h-3zM775 439h3v1h-3zM22 449h3v1h-3zM775 449h3v1h-3zM22 459h3v1h-3zM775 459h3v1h-3zM22 469h6v1h-6zM772 469h6v1h-6zM22 479h3v1h-3zM775 479h3v1h-3zM22 489h3v1h-3zM775 489h3v1h-3zM22 499h3v1h-3zM775 499h3v1h-3zM22 509h3v1h-3zM775 509h3v1h-3z" fill="#f0f0f0" shape-rendering="crispEdges"/><path d="M22 195h2v1h-2zM27 195h4v1h-4zM34 195h4v1h-4zM41 195h4v1h-4zM48 195h4v1h-4zM55 195h4v1h-4zM62 195h4v1h-4zM69 195h4v1h-4zM76 195h4v1h-4zM83 195h4v1h-4zM90 195h4v1h-4zM97 195h4v1h-4zM104 195h4v1h-4zM111 195h4v1h-4zM118 195h4v1h-4zM125 195h4v1h-4zM132 195h4v1h-4zM139 195h4v1h-4zM146 195h4v1h-4zM153 195h4v1h-4zM160 195h4v1h-4zM167 195h4v1h-4zM174 195h4v1h-4zM181 195h4v1h-4zM188 195h4v1h-4zM195 195h4v1h-4zM202 195h4v1h-4zM209 195h4v1h-4zM216 195h4v1h-4zM223 195h4v1h-4zM230 195h4v1h-4zM237 195h4v1h-4zM244 195h4v1h-4zM251 195h4v1h-4zM258 195h4v1h-4zM265 195h4v1h-4zM272 195h4v1h-4zM279 195h4v1h-4zM286 195h4v1h-4zM293 195h4v1h-4zM300 195h4v1h-4zM307 195h4v1h-4zM314 195h4v1h-4zM321 195h4v1h-4zM328 195h4v1h-4zM335 195h4v1h-4zM342 195h4v1h-4zM349 195h4v1h-4zM356 195h4v1h-4zM363 195h4v1h-4zM370 195h4v1h-4zM377 195h4v1h-4zM384 195h4v1h-4zM391 195h4v1h-4zM398 195h4v1h-4zM405 195h4v1h-4zM412 195h4v1h-4zM419 195h4v1h-4zM426 195h4v1h-4zM433 195h4v1h-4zM440 195h4v1h-4zM447 195h4v1h-4zM454 195h4v1h-4zM461 195h4v1h-4zM468 195h4v1h-4zM475 195h4v1h-4zM482 195h4v1h-4zM489 195h4v1h-4zM496 195h4v1h-4zM503 195h4v1h-4zM510 195h4v1h-4zM517 195h4v1h-4zM524 195h4v1h-4zM531 195h4v1h-4zM538 195h4v1h-4zM545 195h4v1h-4zM552 195h4v1h-4zM559 195h4v1h-4zM566 195h4v1h-4zM573 195h4v1h-4zM580 195h4v1h-4zM587 195h4v1h-4zM594 195h4v1h-4zM601 195h4v1h-4zM608 195h4v1h-4zM615 195h4v1h-4zM622 195h4v1h-4zM629 195h4v1h-4zM636 195h4v1h-4zM643 195h4v1h-4zM650 195h4v1h-4zM657 195h4v1h-4zM664 195h4v1h-4zM671 195h4v1h-4zM678 195h4v1h-4zM685 195h4v1h-4zM692 195h4v1h-4zM699 195h4v1h-4zM706 195h4v1h-4zM713 195h4v1h-4zM720 195h4v1h-4zM727 195h4v1h-4zM734 195h4v1h-4zM741 195h4v1h-4zM748 195h4v1h-4zM755 195h4v1h-4zM762 195h4v1h-4zM769 195h4v1h-4zM776 195h2v1h-2z" fill="#a030d0" shape-rendering="crispEdges"/><path d="M25 195h1v1h-1zM32 195h1v1h-1zM39 195h1v1h-1zM46 195h1v1h-1zM53 195h1v1h-1zM60 195h1v1h-1zM67 195h1v1h-1zM74 195h1v1h-1zM81 195h1v1h-1zM88 195h1v1h-1zM95 195h1v1h-1zM102 195h1v1h-1zM109 195h1v1h-1zM116 195h1v1h-1zM123 195h1v1h-1zM130 195h1v1h-1zM137 195h1v1h-1zM144 195h1v1h-1zM151 195h1v1h-1zM158 195h1v1h-1zM165 195h1v1h-1zM172 195h1v1h-1zM179 195h1v1h-1zM186 195h1v1h-1zM193 195h1v1h-1zM200 195h1v1h-1zM207 195h1v1h-1zM214 195h1v1h-1zM221 195h1v1h-1zM228 195h1v1h-1zM235 195h1v1h-1zM242 195h1v1h-1zM249 195h1v1h-1zM256 195h1v1h-1zM263 195h1v1h-1zM270 195h1v1h-1zM277 195h1v1h-1zM284 195h1v1h-1zM291 195h1v1h-1zM298 195h1v1h-1zM305 195h1v1h-1zM312 195h1v1h-1zM319 195h1v1h-1zM326 195h1v1h-1zM333 195h1v1h-1zM340 195h1v1h-1zM347 195h1v1h-1zM354 195h1v1h-1zM361 195h1v1h-1zM368 195h1v1h-1zM375 195h1v1h-1zM382 195h1v1h-1zM389 195h1v1h-1zM396 195h1v1h-1zM403 195h1v1h-1zM410 195h1v1h-1zM417 195h1v1h-1zM424 195h1v1h-1zM431 195h1v1h-1zM438 195h1v1h-1zM445 195h1v1h-1zM452 195h1v1h-1zM459 195h1v1h-1zM466 195h1v1h-1zM473 195h1v1h-1zM480 195h1v1h-1zM487 195h1v1h-1zM494 195h1v1h-1zM501 195h1v1h-1zM508 195h1v1h-1zM515 195h1v1h-1zM522 195h1v1h-1zM529 195h1v1h-1zM536 195h1v1h-1zM543 195h1v1h-1zM550 195h1v1h-1zM557 195h1v1h-1zM564 195h1v1h-1zM571 195h1v1h-1zM578 195h1v1h-1zM585 195h1v1h-1zM592 195h1v1h-1zM599 195h1v1h-1zM606 195h1v1h-1zM613 195h1v1h-1zM620 195h1v1h-1zM627 195h1v1h-1zM634 195h1v1h-1zM641 195h1v1h-1zM648 195h1v1h-1zM655 195h1v1h-1zM662 195h1v1h-1zM669 195h1v1h-1zM676 195h1v1h-1zM683 195h1v1h-1zM690 195h1v1h-1zM697 195h1v1h-1zM704 195h1v1h-1zM711 195h1v1h-1zM718 195h1v1h-1zM725 195h1v1h-1zM732 195h1v1h-1zM739 195h1v1h-1zM746 195h1v1h-1zM753 195h1v1h-1zM760 195h1v1h-1zM767 195h1v1h-1zM774 195h1v1h-1z" fill="#c890e0" shape-rendering="crispEdges"/><path d="M22 269h2v1h-2zM27 269h4v1h-4zM34 269h4v1h-4zM41 269h4v1h-4zM48 269h4v1h-4zM55 269h4v1h-4zM62 269h4v1h-4zM69 269h4v1h-4zM76 269h4v1h-4zM83 269h4v1h-4zM90 269h4v1h-4zM97 269h4v1h-4zM104 269h4v1h-4zM111 269h4v1h-4zM118 269h4v1h-4zM125 269h4v1h-4zM132 269h4v1h-4zM139 269h4v1h-4zM146 269h4v1h-4zM153 269h4v1h-4zM160 269h4v1h-4zM167 269h4v1h-4zM174 269h4v1h-4zM181 269h4v1h-4zM188 269h4v1h-4zM195 269h4v1h-4zM202 269h4v1h-4zM209 269h4v1h-4zM216 269h4v1h-4zM223 269h4v1h-4zM230 269h4v1h-4zM237 269h4v1h-4zM244 269h4v1h-4zM251 269h4v1h-4zM258 269h4v1h-4zM265 269h4v1h-4zM272 269h4v1h-4zM279 269h4v1h-4zM286 269h4v1h-4zM293 269h4v1h-4zM300 269h4v1h-4zM307 269h4v1h-4zM314 269h4v1h-4zM321 269h4v1h-4zM328 269h4v1h-4zM335 269h4v1h-4zM342 269h4v1h-4zM349 269h4v1h-4zM356 269h4v1h-4zM363 269h4v1h-4zM370 269h4v1h-4zM377 269h4v1h-4zM384 269h4v1h-4zM391 269h4v1h-4zM398 269h4v1h-4zM405 269h4v1h-4zM412 269h4v1h-4zM419 269h4v1h-4zM426 269h4v1h-4zM433 269h4v1h-4zM440 269h4v1h-4zM447 269h4v1h-4zM454 269h4v1h-4zM461 269h4v1h-4zM468 269h4v1h-4zM475 269h4v1h-4zM482 269h4v1h-4zM489 269h4v1h-4zM496 269h4v1h-4zM503 269h4v1h-4zM510 269h4v1h-4zM517 269h4v1h-4zM524 269h4v1h-4zM531 269h4v1h-4zM538 269h4v1h-4zM545 269h4v1h-4zM552 269h4v1h-4zM559 269h4v1h-4zM566 269h4v1h-4zM573 269h4v1h-4zM580 269h4v1h-4zM587 269h4v1h-4zM594 269h4v1h-4zM601 269h4v1h-4zM608 269h4v1h-4zM615 269h4v1h-4zM622 269h4v1h-4zM629 269h4v1h-4zM636 269h4v1h-4zM643 269h4v1h-4zM650 269h4v1h-4zM657 269h4v1h-4zM664 269h4v1h-4zM671 269h4v1h-4zM678 269h4v1h-4zM685 269h4v1h-4zM692 269h4v1h-4zM699 269h4v1h-4zM706 269h4v1h-4zM713 269h4v1h-4zM720 269h4v1h-4zM727 269h4v1h-4zM734 269h4v1h-4zM741 269h4v1h-4zM748 269h4v1h-4zM755 269h4v1h-4zM762 269h4v1h-4zM769 269h4v1h-4zM776 269h2v1h-2z" fill="#a030d0" shape-rendering="crispEdges"/><path d="M25 269h1v1h-1zM32 269h1v1h-1zM39 269h1v1h-1zM46 269h1v1h-1zM53 269h1v1h-1zM60 269h1v1h-1zM67 269h1v1h-1zM74 269h1v1h-1zM81 269h1v1h-1zM88 269h1v1h-1zM95 269h1v1h-1zM102 269h1v1h-1zM109 269h1v1h-1zM116 269h1v1h-1zM123 269h1v1h-1zM130 269h1v1h-1zM137 269h1v1h-1zM144 269h1v1h-1zM151 269h1v1h-1zM158 269h1v1h-1zM165 269h1v1h-1zM172 269h1v1h-1zM179 269h1v1h-1zM186 269h1v1h-1zM193 269h1v1h-1zM200 269h1v1h-1zM207 269h1v1h-1zM214 269h1v1h-1zM221 269h1v1h-1zM228 269h1v1h-1zM235 269h1v1h-1zM242 269h1v1h-1zM249 269h1v1h-1zM256 269h1v1h-1zM263 269h1v1h-1zM270 269h1v1h-1zM277 269h1v1h-1zM284 269h1v1h-1zM291 269h1v1h-1zM298 269h1v1h-1zM305 269h1v1h-1zM312 269h1v1h-1zM319 269h1v1h-1zM326 269h1v1h-1zM333 269h1v1h-1zM340 269h1v1h-1zM347 269h1v1h-1zM354 269h1v1h-1zM361 269h1v1h-1zM368 269h1v1h-1zM375 269h1v1h-1zM382 269h1v1h-1zM389 269h1v1h-1zM396 269h1v1h-1zM403 269h1v1h-1zM410 269h1v1h-1zM417 269h1v1h-1zM424 269h1v1h-1zM431 269h1v1h-1zM438 269h1v1h-1zM445 269h1v1h-1zM452 269h1v1h-1zM459 269h1v1h-1zM466 269h1v1h-1zM473 269h1v1h-1zM480 269h1v1h-1zM487 269h1v1h-1zM494 269h1v1h-1zM501 269h1v1h-1zM508 269h1v1h-1zM515 269h1v1h-1zM522 269h1v1h-1zM529 269h1v1h-1zM536 269h1v1h-1zM543 269h1v1h-1zM550 269h1v1h-1zM557 269h1v1h-1zM564 269h1v1h-1zM571 269h1v1h-1zM578 269h1v1h-1zM585 269h1v1h-1zM592 269h1v1h-1zM599 269h1v1h-1zM606 269h1v1h-1zM613 269h1v1h-1zM620 269h1v1h-1zM627 269h1v1h-1zM634 269h1v1h-1zM641 269h1v1h-1zM648 269h1v1h-1zM655 269h1v1h-1zM662 269h1v1h-1zM669 269h1v1h-1zM676 269h1v1h-1zM683 269h1v1h-1zM690 269h1v1h-1zM697 269h1v1h-1zM704 269h1v1h-1zM711 269h1v1h-1zM718 269h1v1h-1zM725 269h1v1h-1zM732 269h1v1h-1zM739 269h1v1h-1zM746 269h1v1h-1zM753 269h1v1h-1zM760 269h1v1h-1zM767 269h1v1h-1zM774 269h1v1h-1z" fill="#c890e0" shape-rendering="crispEdges"/><clipPath id="gc"><rect x="22" y="21" width="756" height="496"/></clipPath><path d="M22 345h1v4h-1zM23 345h1v4h-1zM24 345h1v4h-1zM25 345h1v4h-1zM26 345h1v4h-1zM27 345h1v4h-1zM28 345h1v4h-1zM29 345h1v4h-1zM30 345h1v4h-1zM31 345h1v4h-1zM32 345h1v4h-1zM33 344h1v5h-1zM34 344h1v4h-1zM35 343h1v4h-1zM36 342h1v4h-1zM37 341h1v4h-1zM38 340h1v5h-1zM39 339h1v5h-1zM40 338h1v5h-1zM41 338h1v4h-1zM42 337h1v4h-1zM43 336h1v4h-1zM44 335h1v4h-1zM45 334h1v4h-1zM46 333h1v4h-1zM47 331h1v5h-1zM48 330h1v5h-1zM49 329h1v5h-1zM50 328h1v5h-1zM51 327h1v5h-1zM52 326h1v4h-1zM53 324h1v5h-1zM54 323h1v5h-1zM55 323h1v4h-1zM56 323h1v3h-1zM57 322h1v4h-1zM58 322h1v4h-1zM59 320h1v5h-1zM60 319h1v5h-1zM61 317h1v5h-1zM62 316h1v5h-1zM63 314h1v5h-1zM64 313h1v5h-1zM65 311h1v5h-1zM66 310h1v5h-1zM67 309h1v4h-1zM68 307h1v5h-1zM69 306h1v5h-1zM70 304h1v5h-1zM71 303h1v5h-1zM72 302h1v4h-1zM73 300h1v5h-1zM74 299h1v5h-1zM75 298h1v4h-1zM76 296h1v5h-1zM77 295h1v5h-1zM78 294h1v5h-1zM79 292h1v5h-1zM80 291h1v5h-1zM81 290h1v4h-1zM82 288h1v5h-1zM83 287h1v5h-1zM84 285h1v5h-1zM85 284h1v5h-1zM86 282h1v5h-1zM87 281h1v5h-1zM88 279h1v5h-1zM89 278h1v5h-1zM90 276h1v5h-1zM91 275h1v5h-1zM92 273h1v5h-1zM93 272h1v5h-1zM94 270h1v5h-1zM95 269h1v5h-1zM96 268h1v5h-1zM97 266h1v5h-1zM98 265h1v5h-1zM99 263h1v5h-1zM100 262h1v5h-1zM101 260h1v5h-1zM102 259h1v5h-1zM103 257h1v5h-1zM104 256h1v5h-1zM105 254h1v5h-1zM106 253h1v5h-1zM107 252h1v5h-1zM108 250h1v5h-1zM109 249h1v5h-1zM110 247h1v5h-1zM111 246h1v5h-1zM112 244h1v5h-1zM113 243h1v5h-1zM114 241h1v5h-1zM115 240h1v5h-1zM116 239h1v5h-1zM117 237h1v5h-1zM118 236h1v5h-1zM119 234h1v5h-1zM120 233h1v5h-1zM121 231h1v5h-1zM122 230h1v5h-1zM123 228h1v5h-1zM124 227h1v5h-1zM125 225h1v5h-1zM126 224h1v5h-1zM127 222h1v5h-1zM128 221h1v5h-1zM129 219h1v5h-1zM130 217h1v5h-1zM131 215h1v5h-1zM132 213h1v6h-1zM133 212h1v5h-1zM134 210h1v5h-1zM135 209h1v5h-1zM136 208h1v4h-1zM137 206h1v5h-1zM138 205h1v5h-1zM139 204h1v5h-1zM140 203h1v4h-1zM141 203h1v4h-1zM142 203h1v4h-1zM143 202h1v4h-1zM144 202h1v4h-1zM145 202h1v4h-1zM146 201h1v4h-1zM147 201h1v4h-1zM148 201h1v4h-1zM149 201h1v3h-1zM150 200h1v4h-1zM151 200h1v4h-1zM152 200h1v3h-1zM153 199h1v4h-1zM154 199h1v4h-1zM155 199h1v4h-1zM156 198h1v4h-1zM157 198h1v4h-1zM158 198h1v4h-1zM159 197h1v4h-1zM160 197h1v4h-1zM161 197h1v4h-1zM162 196h1v4h-1zM163 196h1v4h-1zM164 195h1v4h-1zM165 195h1v4h-1zM166 194h1v4h-1zM167 194h1v4h-1zM168 193h1v4h-1zM169 193h1v4h-1zM170 193h1v3h-1zM171 193h1v3h-1zM172 193h1v4h-1zM173 193h1v4h-1zM174 193h1v4h-1zM175 193h1v4h-1zM176 193h1v4h-1zM177 193h1v4h-1zM178 193h1v4h-1zM179 193h1v4h-1zM180 193h1v4h-1zM181 194h1v3h-1zM182 194h1v3h-1zM183 194h1v4h-1zM184 195h1v4h-1zM185 195h1v4h-1zM186 196h1v4h-1zM187 196h1v4h-1zM188 197h1v4h-1zM189 197h1v4h-1zM190 198h1v4h-1zM191 198h1v4h-1zM192 199h1v4h-1zM193 199h1v4h-1zM194 200h1v4h-1zM195 200h1v4h-1zM196 201h1v4h-1zM197 201h1v4h-1zM198 202h1v3h-1zM199 202h1v4h-1zM200 202h1v4h-1zM201 203h1v4h-1zM202 203h1v4h-1zM203 203h1v4h-1zM204 204h1v4h-1zM205 204h1v4h-1zM206 205h1v4h-1zM207 205h1v5h-1zM208 206h1v4h-1zM209 207h1v4h-1zM210 208h1v4h-1zM211 208h1v5h-1zM212 209h1v5h-1zM213 211h1v4h-1zM214 212h1v5h-1zM215 213h1v5h-1zM216 214h1v5h-1zM217 216h1v5h-1zM218 217h1v5h-1zM219 218h1v5h-1zM220 220h1v4h-1zM221 221h1v4h-1zM222 222h1v4h-1zM223 223h1v4h-1zM224 224h1v4h-1zM225 225h1v4h-1zM226 226h1v4h-1zM227 227h1v4h-1zM228 228h1v4h-1zM229 228h1v5h-1zM230 229h1v5h-1zM231 230h1v4h-1zM232 231h1v4h-1zM233 231h1v5h-1zM234 232h1v4h-1zM235 233h1v4h-1zM236 233h1v5h-1zM237 234h1v4h-1zM238 235h1v4h-1zM239 236h1v4h-1zM240 237h1v5h-1zM241 238h1v5h-1zM242 240h1v5h-1zM243 241h1v6h-1zM244 243h1v5h-1zM245 245h1v5h-1zM246 246h1v5h-1zM247 248h1v5h-1zM248 250h1v5h-1zM249 251h1v5h-1zM250 253h1v5h-1zM251 255h1v5h-1zM252 256h1v6h-1zM253 258h1v5h-1zM254 260h1v5h-1zM255 262h1v5h-1zM256 263h1v5h-1zM257 265h1v5h-1zM258 266h1v5h-1zM259 268h1v4h-1zM260 269h1v4h-1zM261 270h1v4h-1zM262 271h1v4h-1zM263 272h1v5h-1zM264 273h1v5h-1zM265 275h1v5h-1zM266 276h1v6h-1zM267 278h1v5h-1zM268 280h1v5h-1zM269 282h1v5h-1zM270 283h1v6h-1zM271 285h1v6h-1zM272 287h1v5h-1zM273 289h1v5h-1zM274 291h1v5h-1zM275 292h1v6h-1zM276 294h1v5h-1zM277 296h1v5h-1zM278 298h1v5h-1zM279 299h1v5h-1zM280 301h1v5h-1zM281 303h1v5h-1zM282 304h1v5h-1zM283 306h1v5h-1zM284 307h1v6h-1zM285 309h1v5h-1zM286 311h1v5h-1zM287 312h1v5h-1zM288 314h1v5h-1zM289 316h1v5h-1zM290 317h1v5h-1zM291 319h1v5h-1zM292 320h1v6h-1zM293 322h1v5h-1zM294 324h1v5h-1zM295 325h1v5h-1zM296 327h1v5h-1zM297 328h1v5h-1zM298 330h1v5h-1zM299 331h1v5h-1zM300 332h1v5h-1zM301 333h1v4h-1zM302 334h1v4h-1zM303 334h1v4h-1zM304 335h1v4h-1zM305 335h1v4h-1zM306 335h1v4h-1zM307 335h1v4h-1zM308 336h1v4h-1zM309 337h1v4h-1zM310 338h1v4h-1zM311 339h1v4h-1zM312 340h1v5h-1zM313 341h1v5h-1zM314 342h1v5h-1zM315 343h1v5h-1zM316 344h1v5h-1zM317 345h1v4h-1zM318 346h1v4h-1zM319 346h1v4h-1zM320 347h1v4h-1zM321 348h1v4h-1zM322 348h1v4h-1zM323 349h1v4h-1zM324 349h1v5h-1zM325 350h1v4h-1zM326 351h1v3h-1zM327 351h1v3h-1zM328 351h1v3h-1zM329 351h1v3h-1zM330 351h1v3h-1zM331 351h1v3h-1zM332 350h1v4h-1zM333 349h1v4h-1zM334 348h1v4h-1zM335 347h1v5h-1zM336 347h1v4h-1zM337 346h1v4h-1zM338 345h1v4h-1zM339 344h1v5h-1zM340 344h1v4h-1zM341 343h1v4h-1zM342 342h1v4h-1zM343 342h1v4h-1zM344 341h1v4h-1zM345 340h1v5h-1zM346 340h1v4h-1zM347 340h1v4h-1zM348 341h1v4h-1zM349 341h1v4h-1zM350 341h1v4h-1zM351 342h1v4h-1zM352 342h1v4h-1zM353 342h1v4h-1zM354 343h1v4h-1zM355 343h1v4h-1zM356 343h1v4h-1zM357 343h1v4h-1zM358 343h1v3h-1zM359 343h1v3h-1zM360 342h1v4h-1zM361 340h1v6h-1zM362 338h1v6h-1zM363 337h1v5h-1zM364 335h1v5h-1zM365 333h1v5h-1zM366 331h1v5h-1zM367 330h1v5h-1zM368 328h1v5h-1zM369 327h1v5h-1zM370 325h1v5h-1zM371 324h1v5h-1zM372 322h1v5h-1zM373 321h1v5h-1zM374 320h1v4h-1zM375 319h1v4h-1zM376 318h1v4h-1zM377 317h1v4h-1zM378 316h1v4h-1zM379 316h1v4h-1zM380 316h1v3h-1zM381 315h1v4h-1zM382 315h1v4h-1zM383 315h1v3h-1zM384 315h1v3h-1zM385 315h1v3h-1zM386 313h1v5h-1zM387 312h1v5h-1zM388 310h1v5h-1zM389 309h1v5h-1zM390 308h1v5h-1zM391 307h1v4h-1zM392 306h1v4h-1zM393 304h1v5h-1zM394 303h1v5h-1zM395 302h1v5h-1zM396 300h1v5h-1zM397 298h1v6h-1zM398 297h1v5h-1zM399 293h1v7h-1zM400 289h1v8h-1zM401 287h1v6h-1zM402 284h1v6h-1zM403 282h1v6h-1zM404 281h1v5h-1zM405 280h1v5h-1zM406 279h1v4h-1zM407 278h1v4h-1zM408 277h1v4h-1zM409 276h1v4h-1zM410 275h1v4h-1zM411 274h1v4h-1zM412 272h1v5h-1zM413 271h1v5h-1zM414 269h1v5h-1zM415 268h1v5h-1zM416 267h1v5h-1zM417 267h1v4h-1zM418 266h1v4h-1zM419 265h1v4h-1zM420 263h1v5h-1zM421 262h1v5h-1zM422 261h1v5h-1zM423 259h1v5h-1zM424 258h1v5h-1zM425 256h1v5h-1zM426 253h1v6h-1zM427 251h1v6h-1zM428 249h1v5h-1zM429 246h1v6h-1zM430 244h1v6h-1zM431 241h1v6h-1zM432 239h1v6h-1zM433 237h1v6h-1zM434 235h1v6h-1zM435 233h1v6h-1zM436 231h1v6h-1zM437 229h1v6h-1zM438 228h1v5h-1zM439 226h1v5h-1zM440 225h1v5h-1zM441 223h1v5h-1zM442 222h1v5h-1zM443 220h1v5h-1zM444 219h1v5h-1zM445 218h1v5h-1zM446 217h1v4h-1zM447 216h1v4h-1zM448 215h1v4h-1zM449 214h1v4h-1zM450 213h1v5h-1zM451 213h1v4h-1zM452 212h1v4h-1zM453 211h1v4h-1zM454 210h1v5h-1zM455 209h1v5h-1zM456 208h1v5h-1zM457 208h1v4h-1zM458 207h1v4h-1zM459 206h1v4h-1zM460 205h1v4h-1zM461 204h1v4h-1zM462 203h1v4h-1zM463 202h1v5h-1zM464 201h1v5h-1zM465 200h1v5h-1zM466 199h1v5h-1zM467 199h1v4h-1zM468 198h1v4h-1zM469 197h1v4h-1zM470 196h1v4h-1zM471 196h1v4h-1zM472 196h1v3h-1zM473 195h1v4h-1zM474 195h1v4h-1zM475 195h1v3h-1zM476 195h1v3h-1zM477 195h1v3h-1zM478 195h1v3h-1zM479 195h1v4h-1zM480 195h1v4h-1zM481 195h1v4h-1zM482 194h1v4h-1zM483 194h1v4h-1zM484 193h1v4h-1zM485 193h1v4h-1zM486 193h1v3h-1zM487 193h1v3h-1zM488 193h1v3h-1zM489 193h1v3h-1zM490 193h1v3h-1zM491 193h1v3h-1zM492 193h1v3h-1zM493 193h1v3h-1zM494 193h1v3h-1zM495 193h1v3h-1zM496 193h1v3h-1zM497 193h1v3h-1zM498 193h1v4h-1zM499 193h1v4h-1zM500 193h1v4h-1zM501 193h1v4h-1zM502 194h1v4h-1zM503 194h1v4h-1zM504 195h1v4h-1zM505 195h1v4h-1zM506 195h1v4h-1zM507 196h1v3h-1zM508 196h1v4h-1zM509 196h1v4h-1zM510 196h1v4h-1zM511 197h1v4h-1zM512 197h1v4h-1zM513 198h1v4h-1zM514 198h1v4h-1zM515 199h1v4h-1zM516 199h1v5h-1zM517 200h1v5h-1zM518 201h1v4h-1zM519 202h1v4h-1zM520 203h1v4h-1zM521 204h1v5h-1zM522 205h1v5h-1zM523 206h1v5h-1zM524 207h1v4h-1zM525 208h1v4h-1zM526 209h1v4h-1zM527 210h1v4h-1zM528 210h1v5h-1zM529 211h1v4h-1zM530 212h1v4h-1zM531 213h1v4h-1zM532 213h1v5h-1zM533 214h1v4h-1zM534 215h1v4h-1zM535 215h1v4h-1zM536 216h1v4h-1zM537 216h1v5h-1zM538 217h1v4h-1zM539 218h1v4h-1zM540 218h1v5h-1zM541 219h1v4h-1zM542 220h1v4h-1zM543 221h1v4h-1zM544 222h1v4h-1zM545 222h1v6h-1zM546 224h1v5h-1zM547 226h1v5h-1zM548 227h1v6h-1zM549 229h1v5h-1zM550 231h1v4h-1zM551 232h1v4h-1zM552 233h1v4h-1zM553 234h1v4h-1zM554 235h1v4h-1zM555 236h1v4h-1zM556 237h1v4h-1zM557 238h1v4h-1zM558 239h1v5h-1zM559 240h1v5h-1zM560 241h1v5h-1zM561 242h1v5h-1zM562 243h1v5h-1zM563 245h1v4h-1zM564 246h1v4h-1zM565 247h1v4h-1zM566 248h1v5h-1zM567 249h1v5h-1zM568 250h1v5h-1zM569 251h1v5h-1zM570 252h1v6h-1zM571 254h1v5h-1zM572 256h1v5h-1zM573 257h1v6h-1zM574 259h1v5h-1zM575 261h1v5h-1zM576 262h1v5h-1zM577 264h1v5h-1zM578 266h1v5h-1zM579 267h1v5h-1zM580 269h1v5h-1zM581 270h1v5h-1zM582 272h1v5h-1zM583 273h1v5h-1zM584 275h1v5h-1zM585 277h1v5h-1zM586 278h1v6h-1zM587 280h1v6h-1zM588 282h1v6h-1zM589 284h1v5h-1zM590 286h1v5h-1zM591 288h1v5h-1zM592 290h1v5h-1zM593 292h1v5h-1zM594 294h1v5h-1zM595 296h1v5h-1zM596 298h1v5h-1zM597 299h1v5h-1zM598 301h1v5h-1zM599 302h1v5h-1zM600 304h1v5h-1zM601 305h1v5h-1zM602 306h1v5h-1zM603 308h1v5h-1zM604 309h1v5h-1zM605 311h1v5h-1zM606 313h1v5h-1zM607 314h1v5h-1zM608 316h1v5h-1zM609 317h1v5h-1zM610 319h1v5h-1zM611 320h1v5h-1zM612 322h1v5h-1zM613 323h1v5h-1zM614 325h1v4h-1zM615 326h1v5h-1zM616 327h1v5h-1zM617 329h1v5h-1zM618 330h1v5h-1zM619 332h1v5h-1zM620 333h1v5h-1zM621 335h1v5h-1zM622 336h1v5h-1zM623 338h1v3h-1zM624 338h1v4h-1zM625 338h1v4h-1zM626 339h1v3h-1zM627 339h1v4h-1zM628 339h1v5h-1zM629 340h1v4h-1zM630 341h1v4h-1zM631 341h1v5h-1zM632 342h1v5h-1zM633 344h1v5h-1zM634 345h1v5h-1zM635 347h1v3h-1zM636 347h1v3h-1zM637 347h1v3h-1zM638 347h1v3h-1zM639 347h1v3h-1zM640 347h1v3h-1zM641 347h1v3h-1zM642 347h1v3h-1zM643 347h1v4h-1zM644 348h1v4h-1zM645 348h1v5h-1zM646 349h1v5h-1zM647 350h1v4h-1zM648 351h1v4h-1zM649 351h1v5h-1zM650 352h1v4h-1zM651 352h1v4h-1zM652 352h1v4h-1zM653 351h1v4h-1zM654 350h1v4h-1zM655 349h1v4h-1zM656 348h1v4h-1zM657 347h1v4h-1zM658 346h1v4h-1zM659 345h1v4h-1zM660 345h1v4h-1zM661 344h1v4h-1zM662 343h1v4h-1zM663 343h1v4h-1zM664 342h1v4h-1zM665 342h1v4h-1zM666 341h1v4h-1zM667 341h1v4h-1zM668 341h1v4h-1zM669 340h1v4h-1zM670 340h1v4h-1zM671 340h1v4h-1zM672 340h1v3h-1zM673 339h1v4h-1zM674 339h1v4h-1zM675 339h1v4h-1zM676 339h1v3h-1zM677 339h1v3h-1zM678 338h1v4h-1zM679 338h1v4h-1zM680 338h1v4h-1zM681 336h1v5h-1zM682 335h1v5h-1zM683 333h1v5h-1zM684 332h1v5h-1zM685 331h1v4h-1zM686 329h1v5h-1zM687 328h1v5h-1zM688 327h1v4h-1zM689 325h1v5h-1zM690 324h1v5h-1zM691 323h1v4h-1zM692 321h1v5h-1zM693 320h1v5h-1zM694 319h1v5h-1zM695 317h1v5h-1zM696 316h1v5h-1zM697 315h1v5h-1zM698 314h1v4h-1zM699 312h1v5h-1zM700 311h1v5h-1zM701 310h1v4h-1zM702 308h1v5h-1zM703 307h1v5h-1zM704 307h1v4h-1zM705 306h1v4h-1zM706 305h1v5h-1zM707 305h1v4h-1zM708 304h1v4h-1zM709 303h1v5h-1zM710 302h1v5h-1zM711 301h1v5h-1zM712 300h1v5h-1zM713 299h1v4h-1zM714 297h1v5h-1zM715 296h1v5h-1zM716 295h1v5h-1zM717 294h1v4h-1zM718 292h1v5h-1zM719 291h1v5h-1zM720 290h1v5h-1zM721 288h1v5h-1zM722 287h1v5h-1zM723 285h1v5h-1zM724 284h1v5h-1zM725 282h1v5h-1zM726 281h1v5h-1zM727 279h1v5h-1zM728 278h1v5h-1zM729 276h1v5h-1zM730 275h1v5h-1zM731 273h1v5h-1zM732 272h1v5h-1zM733 270h1v5h-1zM734 269h1v5h-1zM735 267h1v5h-1zM736 266h1v5h-1zM737 264h1v5h-1zM738 263h1v5h-1zM739 261h1v5h-1zM740 260h1v5h-1zM741 258h1v5h-1zM742 257h1v5h-1zM743 255h1v5h-1zM744 253h1v5h-1zM745 251h1v6h-1zM746 250h1v5h-1zM747 248h1v5h-1zM748 246h1v5h-1zM749 244h1v6h-1zM750 243h1v5h-1zM751 241h1v5h-1zM752 239h1v5h-1zM753 238h1v5h-1zM754 236h1v5h-1zM755 235h1v5h-1zM756 233h1v5h-1zM757 232h1v5h-1zM758 230h1v5h-1zM759 229h1v5h-1zM760 227h1v5h-1zM761 226h1v5h-1zM762 224h1v5h-1zM763 222h1v5h-1zM764 220h1v6h-1zM765 218h1v6h-1zM766 217h1v5h-1zM767 215h1v5h-1zM768 213h1v5h-1zM769 212h1v5h-1zM770 210h1v5h-1zM771 209h1v5h-1zM772 208h1v5h-1zM773 206h1v5h-1zM774 205h1v5h-1zM775 204h1v4h-1zM776 203h1v4h-1zM777 202h1v5h-1z" fill="#ece428" shape-rendering="crispEdges"/><g><path d="M20 118 H116 Q123 118 123 125 V287 Q123 293 117 293 H20 Z" fill="#70aec0"/><path d="M20 120 H115 Q121 120 121 126 V286 Q121 291 116 291 H20 Z" fill="#0a6cb8"/><path d="M20 123 H109 Q119 123 119 133 Q119 143 109 143 H20 Z" fill="#0a3a80"/><path d="M20 123 H108 Q118 123 118 132.5 Q118 142 108 142 H20 Z" fill="#5c9ee4"/><rect x="20" y="123" width="88" height="1.5" fill="#90c8f4"/><path d="M20 147 H113 Q117 147 117 151 V167 Q117 171 113 171 H20 Z" fill="#0886e6"/><path d="M20 177 H113 Q117 177 117 181 V196 Q117 200 113 200 H20 Z" fill="#0886e6"/><path d="M20 207 H113 Q117 207 117 211 V228 Q117 232 113 232 H20 Z" fill="#62bae8"/><path d="M20 237 H113 Q117 237 117 241 V256 Q117 260 113 260 H20 Z" fill="#0886e6"/><path d="M20 267 H113 Q117 267 117 271 V287 Q117 291 113 291 H20 Z" fill="#0886e6"/><rect x="20" y="173" width="97" height="2" fill="#62aac8"/><rect x="20" y="203" width="97" height="2" fill="#62aac8"/><rect x="20" y="234" width="97" height="2" fill="#62aac8"/><rect x="20" y="263" width="97" height="2" fill="#62aac8"/></g><circle cx="47.5" cy="133" r="8.2" fill="#a040d0"/><text x="47.3" y="137.7" text-anchor="middle" font-family="Liberation Sans" font-weight="bold" font-size="13" fill="#000" transform="translate(47.3 0) scale(0.95 1) translate(-47.3 0)">M</text><text x="59.50 69.40 79.40" y="134.5" text-anchor="middle" font-family="Liberation Sans" font-size="13" fill="#06103a">Тип</text><clipPath id="mc"><rect x="20" y="100" width="100" height="200"/></clipPath><g clip-path="url(#mc)" font-family="Liberation Sans" font-size="13" fill="#06103a"><text x="18.50 29.90 39.90 49.25 58.90 68.60 79.60 89.25 101.10" y="161.3" text-anchor="middle" >Осциллог.</text><text x="19.50 29.90 39.25 49.60 59.25 69.25 79.60 89.25 99.25" y="191.3" text-anchor="middle" >Настройки</text><text x="24.60 32.00 44.60 54.25 64.25 74.25 85.50 96.10" y="223.2" text-anchor="middle" >Изображ.</text><text x="34.90 44.90 54.60 64.60 74.25 84.60" y="252" text-anchor="middle" >Запись</text><text x="30.50 39.90 49.25 59.60 69.90 79.60 90.80" y="282.5" text-anchor="middle" font-family="Liberation Mono" font-size="15" fill="#000828">CutWave</text></g><clipPath id="mc2"><rect x="0" y="100" width="124" height="200"/></clipPath><g clip-path="url(#mc2)"><path d="M22 195h2v1h-2zM27 195h4v1h-4zM34 195h4v1h-4zM41 195h4v1h-4zM48 195h4v1h-4zM55 195h4v1h-4zM62 195h4v1h-4zM69 195h4v1h-4zM76 195h4v1h-4zM83 195h4v1h-4zM90 195h4v1h-4zM97 195h4v1h-4zM104 195h4v1h-4zM111 195h4v1h-4zM118 195h4v1h-4zM125 195h4v1h-4zM132 195h4v1h-4zM139 195h4v1h-4zM146 195h4v1h-4zM153 195h4v1h-4zM160 195h4v1h-4zM167 195h4v1h-4zM174 195h4v1h-4zM181 195h4v1h-4zM188 195h4v1h-4zM195 195h4v1h-4zM202 195h4v1h-4zM209 195h4v1h-4zM216 195h4v1h-4zM223 195h4v1h-4zM230 195h4v1h-4zM237 195h4v1h-4zM244 195h4v1h-4zM251 195h4v1h-4zM258 195h4v1h-4zM265 195h4v1h-4zM272 195h4v1h-4zM279 195h4v1h-4zM286 195h4v1h-4zM293 195h4v1h-4zM300 195h4v1h-4zM307 195h4v1h-4zM314 195h4v1h-4zM321 195h4v1h-4zM328 195h4v1h-4zM335 195h4v1h-4zM342 195h4v1h-4zM349 195h4v1h-4zM356 195h4v1h-4zM363 195h4v1h-4zM370 195h4v1h-4zM377 195h4v1h-4zM384 195h4v1h-4zM391 195h4v1h-4zM398 195h4v1h-4zM405 195h4v1h-4zM412 195h4v1h-4zM419 195h4v1h-4zM426 195h4v1h-4zM433 195h4v1h-4zM440 195h4v1h-4zM447 195h4v1h-4zM454 195h4v1h-4zM461 195h4v1h-4zM468 195h4v1h-4zM475 195h4v1h-4zM482 195h4v1h-4zM489 195h4v1h-4zM496 195h4v1h-4zM503 195h4v1h-4zM510 195h4v1h-4zM517 195h4v1h-4zM524 195h4v1h-4zM531 195h4v1h-4zM538 195h4v1h-4zM545 195h4v1h-4zM552 195h4v1h-4zM559 195h4v1h-4zM566 195h4v1h-4zM573 195h4v1h-4zM580 195h4v1h-4zM587 195h4v1h-4zM594 195h4v1h-4zM601 195h4v1h-4zM608 195h4v1h-4zM615 195h4v1h-4zM622 195h4v1h-4zM629 195h4v1h-4zM636 195h4v1h-4zM643 195h4v1h-4zM650 195h4v1h-4zM657 195h4v1h-4zM664 195h4v1h-4zM671 195h4v1h-4zM678 195h4v1h-4zM685 195h4v1h-4zM692 195h4v1h-4zM699 195h4v1h-4zM706 195h4v1h-4zM713 195h4v1h-4zM720 195h4v1h-4zM727 195h4v1h-4zM734 195h4v1h-4zM741 195h4v1h-4zM748 195h4v1h-4zM755 195h4v1h-4zM762 195h4v1h-4zM769 195h4v1h-4zM776 195h2v1h-2z" fill="#a030d0" shape-rendering="crispEdges"/><path d="M25 195h1v1h-1zM32 195h1v1h-1zM39 195h1v1h-1zM46 195h1v1h-1zM53 195h1v1h-1zM60 195h1v1h-1zM67 195h1v1h-1zM74 195h1v1h-1zM81 195h1v1h-1zM88 195h1v1h-1zM95 195h1v1h-1zM102 195h1v1h-1zM109 195h1v1h-1zM116 195h1v1h-1zM123 195h1v1h-1zM130 195h1v1h-1zM137 195h1v1h-1zM144 195h1v1h-1zM151 195h1v1h-1zM158 195h1v1h-1zM165 195h1v1h-1zM172 195h1v1h-1zM179 195h1v1h-1zM186 195h1v1h-1zM193 195h1v1h-1zM200 195h1v1h-1zM207 195h1v1h-1zM214 195h1v1h-1zM221 195h1v1h-1zM228 195h1v1h-1zM235 195h1v1h-1zM242 195h1v1h-1zM249 195h1v1h-1zM256 195h1v1h-1zM263 195h1v1h-1zM270 195h1v1h-1zM277 195h1v1h-1zM284 195h1v1h-1zM291 195h1v1h-1zM298 195h1v1h-1zM305 195h1v1h-1zM312 195h1v1h-1zM319 195h1v1h-1zM326 195h1v1h-1zM333 195h1v1h-1zM340 195h1v1h-1zM347 195h1v1h-1zM354 195h1v1h-1zM361 195h1v1h-1zM368 195h1v1h-1zM375 195h1v1h-1zM382 195h1v1h-1zM389 195h1v1h-1zM396 195h1v1h-1zM403 195h1v1h-1zM410 195h1v1h-1zM417 195h1v1h-1zM424 195h1v1h-1zM431 195h1v1h-1zM438 195h1v1h-1zM445 195h1v1h-1zM452 195h1v1h-1zM459 195h1v1h-1zM466 195h1v1h-1zM473 195h1v1h-1zM480 195h1v1h-1zM487 195h1v1h-1zM494 195h1v1h-1zM501 195h1v1h-1zM508 195h1v1h-1zM515 195h1v1h-1zM522 195h1v1h-1zM529 195h1v1h-1zM536 195h1v1h-1zM543 195h1v1h-1zM550 195h1v1h-1zM557 195h1v1h-1zM564 195h1v1h-1zM571 195h1v1h-1zM578 195h1v1h-1zM585 195h1v1h-1zM592 195h1v1h-1zM599 195h1v1h-1zM606 195h1v1h-1zM613 195h1v1h-1zM620 195h1v1h-1zM627 195h1v1h-1zM634 195h1v1h-1zM641 195h1v1h-1zM648 195h1v1h-1zM655 195h1v1h-1zM662 195h1v1h-1zM669 195h1v1h-1zM676 195h1v1h-1zM683 195h1v1h-1zM690 195h1v1h-1zM697 195h1v1h-1zM704 195h1v1h-1zM711 195h1v1h-1zM718 195h1v1h-1zM725 195h1v1h-1zM732 195h1v1h-1zM739 195h1v1h-1zM746 195h1v1h-1zM753 195h1v1h-1zM760 195h1v1h-1zM767 195h1v1h-1zM774 195h1v1h-1z" fill="#c890e0" shape-rendering="crispEdges"/><path d="M22 269h2v1h-2zM27 269h4v1h-4zM34 269h4v1h-4zM41 269h4v1h-4zM48 269h4v1h-4zM55 269h4v1h-4zM62 269h4v1h-4zM69 269h4v1h-4zM76 269h4v1h-4zM83 269h4v1h-4zM90 269h4v1h-4zM97 269h4v1h-4zM104 269h4v1h-4zM111 269h4v1h-4zM118 269h4v1h-4zM125 269h4v1h-4zM132 269h4v1h-4zM139 269h4v1h-4zM146 269h4v1h-4zM153 269h4v1h-4zM160 269h4v1h-4zM167 269h4v1h-4zM174 269h4v1h-4zM181 269h4v1h-4zM188 269h4v1h-4zM195 269h4v1h-4zM202 269h4v1h-4zM209 269h4v1h-4zM216 269h4v1h-4zM223 269h4v1h-4zM230 269h4v1h-4zM237 269h4v1h-4zM244 269h4v1h-4zM251 269h4v1h-4zM258 269h4v1h-4zM265 269h4v1h-4zM272 269h4v1h-4zM279 269h4v1h-4zM286 269h4v1h-4zM293 269h4v1h-4zM300 269h4v1h-4zM307 269h4v1h-4zM314 269h4v1h-4zM321 269h4v1h-4zM328 269h4v1h-4zM335 269h4v1h-4zM342 269h4v1h-4zM349 269h4v1h-4zM356 269h4v1h-4zM363 269h4v1h-4zM370 269h4v1h-4zM377 269h4v1h-4zM384 269h4v1h-4zM391 269h4v1h-4zM398 269h4v1h-4zM405 269h4v1h-4zM412 269h4v1h-4zM419 269h4v1h-4zM426 269h4v1h-4zM433 269h4v1h-4zM440 269h4v1h-4zM447 269h4v1h-4zM454 269h4v1h-4zM461 269h4v1h-4zM468 269h4v1h-4zM475 269h4v1h-4zM482 269h4v1h-4zM489 269h4v1h-4zM496 269h4v1h-4zM503 269h4v1h-4zM510 269h4v1h-4zM517 269h4v1h-4zM524 269h4v1h-4zM531 269h4v1h-4zM538 269h4v1h-4zM545 269h4v1h-4zM552 269h4v1h-4zM559 269h4v1h-4zM566 269h4v1h-4zM573 269h4v1h-4zM580 269h4v1h-4zM587 269h4v1h-4zM594 269h4v1h-4zM601 269h4v1h-4zM608 269h4v1h-4zM615 269h4v1h-4zM622 269h4v1h-4zM629 269h4v1h-4zM636 269h4v1h-4zM643 269h4v1h-4zM650 269h4v1h-4zM657 269h4v1h-4zM664 269h4v1h-4zM671 269h4v1h-4zM678 269h4v1h-4zM685 269h4v1h-4zM692 269h4v1h-4zM699 269h4v1h-4zM706 269h4v1h-4zM713 269h4v1h-4zM720 269h4v1h-4zM727 269h4v1h-4zM734 269h4v1h-4zM741 269h4v1h-4zM748 269h4v1h-4zM755 269h4v1h-4zM762 269h4v1h-4zM769 269h4v1h-4zM776 269h2v1h-2z" fill="#a030d0" shape-rendering="crispEdges"/><path d="M25 269h1v1h-1zM32 269h1v1h-1zM39 269h1v1h-1zM46 269h1v1h-1zM53 269h1v1h-1zM60 269h1v1h-1zM67 269h1v1h-1zM74 269h1v1h-1zM81 269h1v1h-1zM88 269h1v1h-1zM95 269h1v1h-1zM102 269h1v1h-1zM109 269h1v1h-1zM116 269h1v1h-1zM123 269h1v1h-1zM130 269h1v1h-1zM137 269h1v1h-1zM144 269h1v1h-1zM151 269h1v1h-1zM158 269h1v1h-1zM165 269h1v1h-1zM172 269h1v1h-1zM179 269h1v1h-1zM186 269h1v1h-1zM193 269h1v1h-1zM200 269h1v1h-1zM207 269h1v1h-1zM214 269h1v1h-1zM221 269h1v1h-1zM228 269h1v1h-1zM235 269h1v1h-1zM242 269h1v1h-1zM249 269h1v1h-1zM256 269h1v1h-1zM263 269h1v1h-1zM270 269h1v1h-1zM277 269h1v1h-1zM284 269h1v1h-1zM291 269h1v1h-1zM298 269h1v1h-1zM305 269h1v1h-1zM312 269h1v1h-1zM319 269h1v1h-1zM326 269h1v1h-1zM333 269h1v1h-1zM340 269h1v1h-1zM347 269h1v1h-1zM354 269h1v1h-1zM361 269h1v1h-1zM368 269h1v1h-1zM375 269h1v1h-1zM382 269h1v1h-1zM389 269h1v1h-1zM396 269h1v1h-1zM403 269h1v1h-1zM410 269h1v1h-1zM417 269h1v1h-1zM424 269h1v1h-1zM431 269h1v1h-1zM438 269h1v1h-1zM445 269h1v1h-1zM452 269h1v1h-1zM459 269h1v1h-1zM466 269h1v1h-1zM473 269h1v1h-1zM480 269h1v1h-1zM487 269h1v1h-1zM494 269h1v1h-1zM501 269h1v1h-1zM508 269h1v1h-1zM515 269h1v1h-1zM522 269h1v1h-1zM529 269h1v1h-1zM536 269h1v1h-1zM543 269h1v1h-1zM550 269h1v1h-1zM557 269h1v1h-1zM564 269h1v1h-1zM571 269h1v1h-1zM578 269h1v1h-1zM585 269h1v1h-1zM592 269h1v1h-1zM599 269h1v1h-1zM606 269h1v1h-1zM613 269h1v1h-1zM620 269h1v1h-1zM627 269h1v1h-1zM634 269h1v1h-1zM641 269h1v1h-1zM648 269h1v1h-1zM655 269h1v1h-1zM662 269h1v1h-1zM669 269h1v1h-1zM676 269h1v1h-1zM683 269h1v1h-1zM690 269h1v1h-1zM697 269h1v1h-1zM704 269h1v1h-1zM711 269h1v1h-1zM718 269h1v1h-1zM725 269h1v1h-1zM732 269h1v1h-1zM739 269h1v1h-1zM746 269h1v1h-1zM753 269h1v1h-1zM760 269h1v1h-1zM767 269h1v1h-1zM774 269h1v1h-1z" fill="#c890e0" shape-rendering="crispEdges"/></g><path d="M0.7 261.4 H14 L19.8 269.8 L14 278.2 H0.7 Z" fill="#000" stroke="#e8e060" stroke-width="1.4"/><text x="3.4" y="275.4" font-family="Liberation Sans" font-size="16" fill="#f0e050">2</text><path d="M780.5 249.5 L793.5 244 V255.5 Z" fill="#a020e0"/><rect x="26" y="450" width="186" height="68" rx="4" fill="#000" stroke="#88aabc" stroke-width="2"/><circle cx="35.5" cy="459" r="8" fill="#e0d820"/><g font-family="Liberation Mono" font-size="16" letter-spacing="0.4" fill="#ffffff" stroke="#000" stroke-width="0.28"><path d="M44.5 465 L48.5 459 L52.5 465 Z" fill="none" stroke="#f0f0f0" stroke-width="1"/><text x="53" y="466">y:14.80V</text><text x="43" y="488">y1:14.80V</text><text x="43" y="510">y2:0.00mV</text></g><rect x="647" y="499.5" width="125" height="17" rx="4" fill="#000" stroke="#70a0a8" stroke-width="2"/><circle cx="657.4" cy="508.6" r="7.5" fill="#e0d820"/><text x="668" y="514" font-family="Liberation Mono" font-size="16" letter-spacing="0.4" fill="#ffffff" stroke="#000" stroke-width="0.28">15.6505Hz</text><text x="39" y="16" font-family="Liberation Mono" font-size="16" letter-spacing="0.4" fill="#000628" stroke="#0482e2" stroke-width="0.2">AKIP</text><rect x="120" y="1" width="81" height="18" rx="9" fill="#d80404"/><text x="140" y="16" font-family="Liberation Mono" font-size="16" letter-spacing="0.4" fill="#200000" stroke="#d80404" stroke-width="0.2">Stop</text><rect x="250" y="1" width="300" height="18" rx="9" fill="#000"/><rect x="260" y="9" width="281" height="1" fill="#c8c070"/><path d="M294 2h3.5v1.5h-1.5v13h1.5v1.5h-3.5z" fill="#a8a8a8"/><path d="M502.5 2h3.5v16h-3.5v-1.5h1.5v-13h-1.5z" fill="#a8a8a8"/><path d="M398 2h5v2h-2v3h-1v-3h-2z" fill="#e020e0"/><rect x="558" y="1" width="111" height="18" rx="9" fill="#000"/><path d="M564 3.5 H576 V13 L570 17 L564 13 Z" fill="none" stroke="#8030c0" stroke-width="1.5"/><path d="M566.5 6h7v1.5h-2.75v6h-1.5v-6h-2.75z" fill="#a040e0"/><text x="578" y="16" font-family="Liberation Mono" font-size="16" letter-spacing="0.4" fill="#ffffff" stroke="#000" stroke-width="0.28">0.000ns</text><rect x="684" y="1" width="59" height="18" rx="9" fill="#000"/><text x="688" y="16" font-family="Liberation Mono" font-size="16" letter-spacing="0.4" fill="#ffffff" stroke="#000" stroke-width="0.28">18:39</text><path d="M757.5 10.5 L764.5 8 L768.5 13.5 L761 16.2 Z" fill="#c4c8dc"/><path d="M760.5 10.8 L764 9.6 L765.8 12.4 L762.2 13.6 Z" fill="#4a5a90"/><path d="M755.6 4.5 Q756.5 2.2 759.5 2.8 L763.2 3.6 L763.4 7.2 L760.5 9.8 L757.8 10.2 Q755.6 8.5 755.6 4.5 Z" fill="#48b838"/><path d="M756.2 5 Q757 3.2 759 3.6 L759.5 8.8 L757.5 9.2 Q756.2 7.5 756.2 5 Z" fill="#70d858"/><rect x="782" y="1" width="10" height="16" fill="#000"/><path d="M395 21 H407 V32 L401 35.5 L395 32 Z" fill="#000" stroke="#8030c0" stroke-width="1.6"/><path d="M397.5 24.5h7v1.6h-2.7v6h-1.6v-6h-2.7z" fill="#a040e0"/><rect x="0" y="519" width="800" height="81" fill="#0460a0"/><rect x="0" y="519" width="800" height="19" fill="#0482e2"/><rect x="0" y="519" width="320" height="81" fill="#5a98b0"/><rect x="2" y="520" width="207" height="18.5" rx="4" fill="#000"/><rect x="2" y="540.5" width="207" height="18.5" rx="4" fill="#000"/><rect x="2" y="561" width="316" height="37" rx="5" fill="#000"/><rect x="209" y="519" width="111" height="41" fill="#5aa2c2"/><rect x="211" y="519.5" width="107" height="40" rx="6" fill="#000" stroke="#4a90b0" stroke-width="1"/><circle cx="10.3" cy="530" r="7.8" fill="#e01010"/><circle cx="10.3" cy="549.5" r="7.8" fill="#e0d820"/><circle cx="9" cy="570" r="7.5" fill="#e01010"/><circle cx="9" cy="590.5" r="7.5" fill="#e01010"/><circle cx="168.5" cy="569.6" r="7.5" fill="#e0d820"/><circle cx="168.5" cy="588.8" r="7.5" fill="#e0d820"/><g font-family="Liberation Mono" font-size="16" letter-spacing="0.4" stroke="#000" stroke-width="0.28"><text x="17.5" y="536.6" fill="#f03428">500mV~</text><text x="105" y="536.6" fill="#f03428">2.00</text><text x="18.5" y="555.6" fill="#f4ec88">10V~</text><text x="105" y="555.6" fill="#f4ec88">0.00</text><text x="19" y="575" fill="#f03428">Va:OFF</text><text x="19" y="594" fill="#f03428">Vk:OFF</text><text x="180" y="575" fill="#f4ec88">Va:29.60v</text><text x="180" y="594" fill="#f4ec88">Vk:10.90v</text><text x="224" y="535.6" fill="#f03428">(50KS/s)</text><text x="218" y="554" fill="#f03428">Depth:10K</text></g><g font-family="Liberation Sans" font-size="13" letter-spacing="2"><text x="144" y="536" fill="#f03428">дел</text><text x="144" y="555" fill="#f4ec88">дел</text></g><rect x="319" y="520" width="99" height="17.5" rx="8.75" fill="#000"/><text x="338" y="535" font-family="Liberation Mono" font-size="16" letter-spacing="0.4" fill="#ffffff" stroke="#000" stroke-width="0.28">M:10ms</text><rect x="320" y="538.5" width="92.5" height="59.5" rx="2.5" fill="#0c48c8"/><rect x="410" y="541" width="2.5" height="56" fill="#3a78e8"/><rect x="323.5" y="542" width="87" height="54" rx="4" fill="#40b8e0"/><text x="355.00 364.60 374.70" y="560" text-anchor="middle" font-family="Liberation Sans" font-size="13" fill="#06103a">Тип</text><rect x="325.7" y="571.2" width="80.3" height="19.5" fill="#e0e0e0"/><text x="329.50 335.40 348.80 358.60 368.70 379.10 390.40 400.80" y="584.3" text-anchor="middle" font-family="Liberation Sans" font-size="13" fill="#06103a">Изображ.</text><rect x="665" y="520" width="128.5" height="17.7" rx="8.85" fill="#000"/><circle cx="675" cy="528" r="7.5" fill="#e0d820"/><path d="M685 535.5 H693.5 L698 523 H705" fill="none" stroke="#f8f8f8" stroke-width="1.4"/><text x="707" y="535" font-family="Liberation Mono" font-size="16" letter-spacing="0.4" fill="#ffffff" stroke="#000" stroke-width="0.28">4.00V</text><rect x="596.5" y="540.5" width="91" height="56" rx="3" fill="#0a3a80"/><rect x="596.5" y="540.5" width="90" height="55" rx="3" fill="#60a8f0"/><rect x="598" y="542" width="88" height="53" rx="2" fill="#0a84e6"/><text x="620.50 630.30 639.80 650.30 661.00" y="571.8" text-anchor="middle" font-family="Liberation Sans" font-size="12.5" fill="#06103a">СОХР.</text><rect x="0" y="599" width="800" height="1" fill="#0482e2"/><rect x="799" y="519" width="1" height="81" fill="#0482e2"/><g font-family="Liberation Sans" font-size="15" fill="#000" text-anchor="middle"><text x="10.3" y="554.8">2</text><text x="168.5" y="574.9">2</text><text x="168.5" y="594.0999999999999">2</text><text x="35.5" y="464.3">2</text><text x="657.4" y="513.9">2</text><text x="675" y="533.3">2</text></g><path d="M7.700000000000001 528.4 L10.9 525.8 V534.6" fill="none" stroke="#000" stroke-width="1.7"/><path d="M6.4 568.4 L9.6 565.8 V574.6" fill="none" stroke="#000" stroke-width="1.7"/><path d="M6.4 588.9 L9.6 586.3 V595.1" fill="none" stroke="#000" stroke-width="1.7"/>
</svg>
</body></html>
